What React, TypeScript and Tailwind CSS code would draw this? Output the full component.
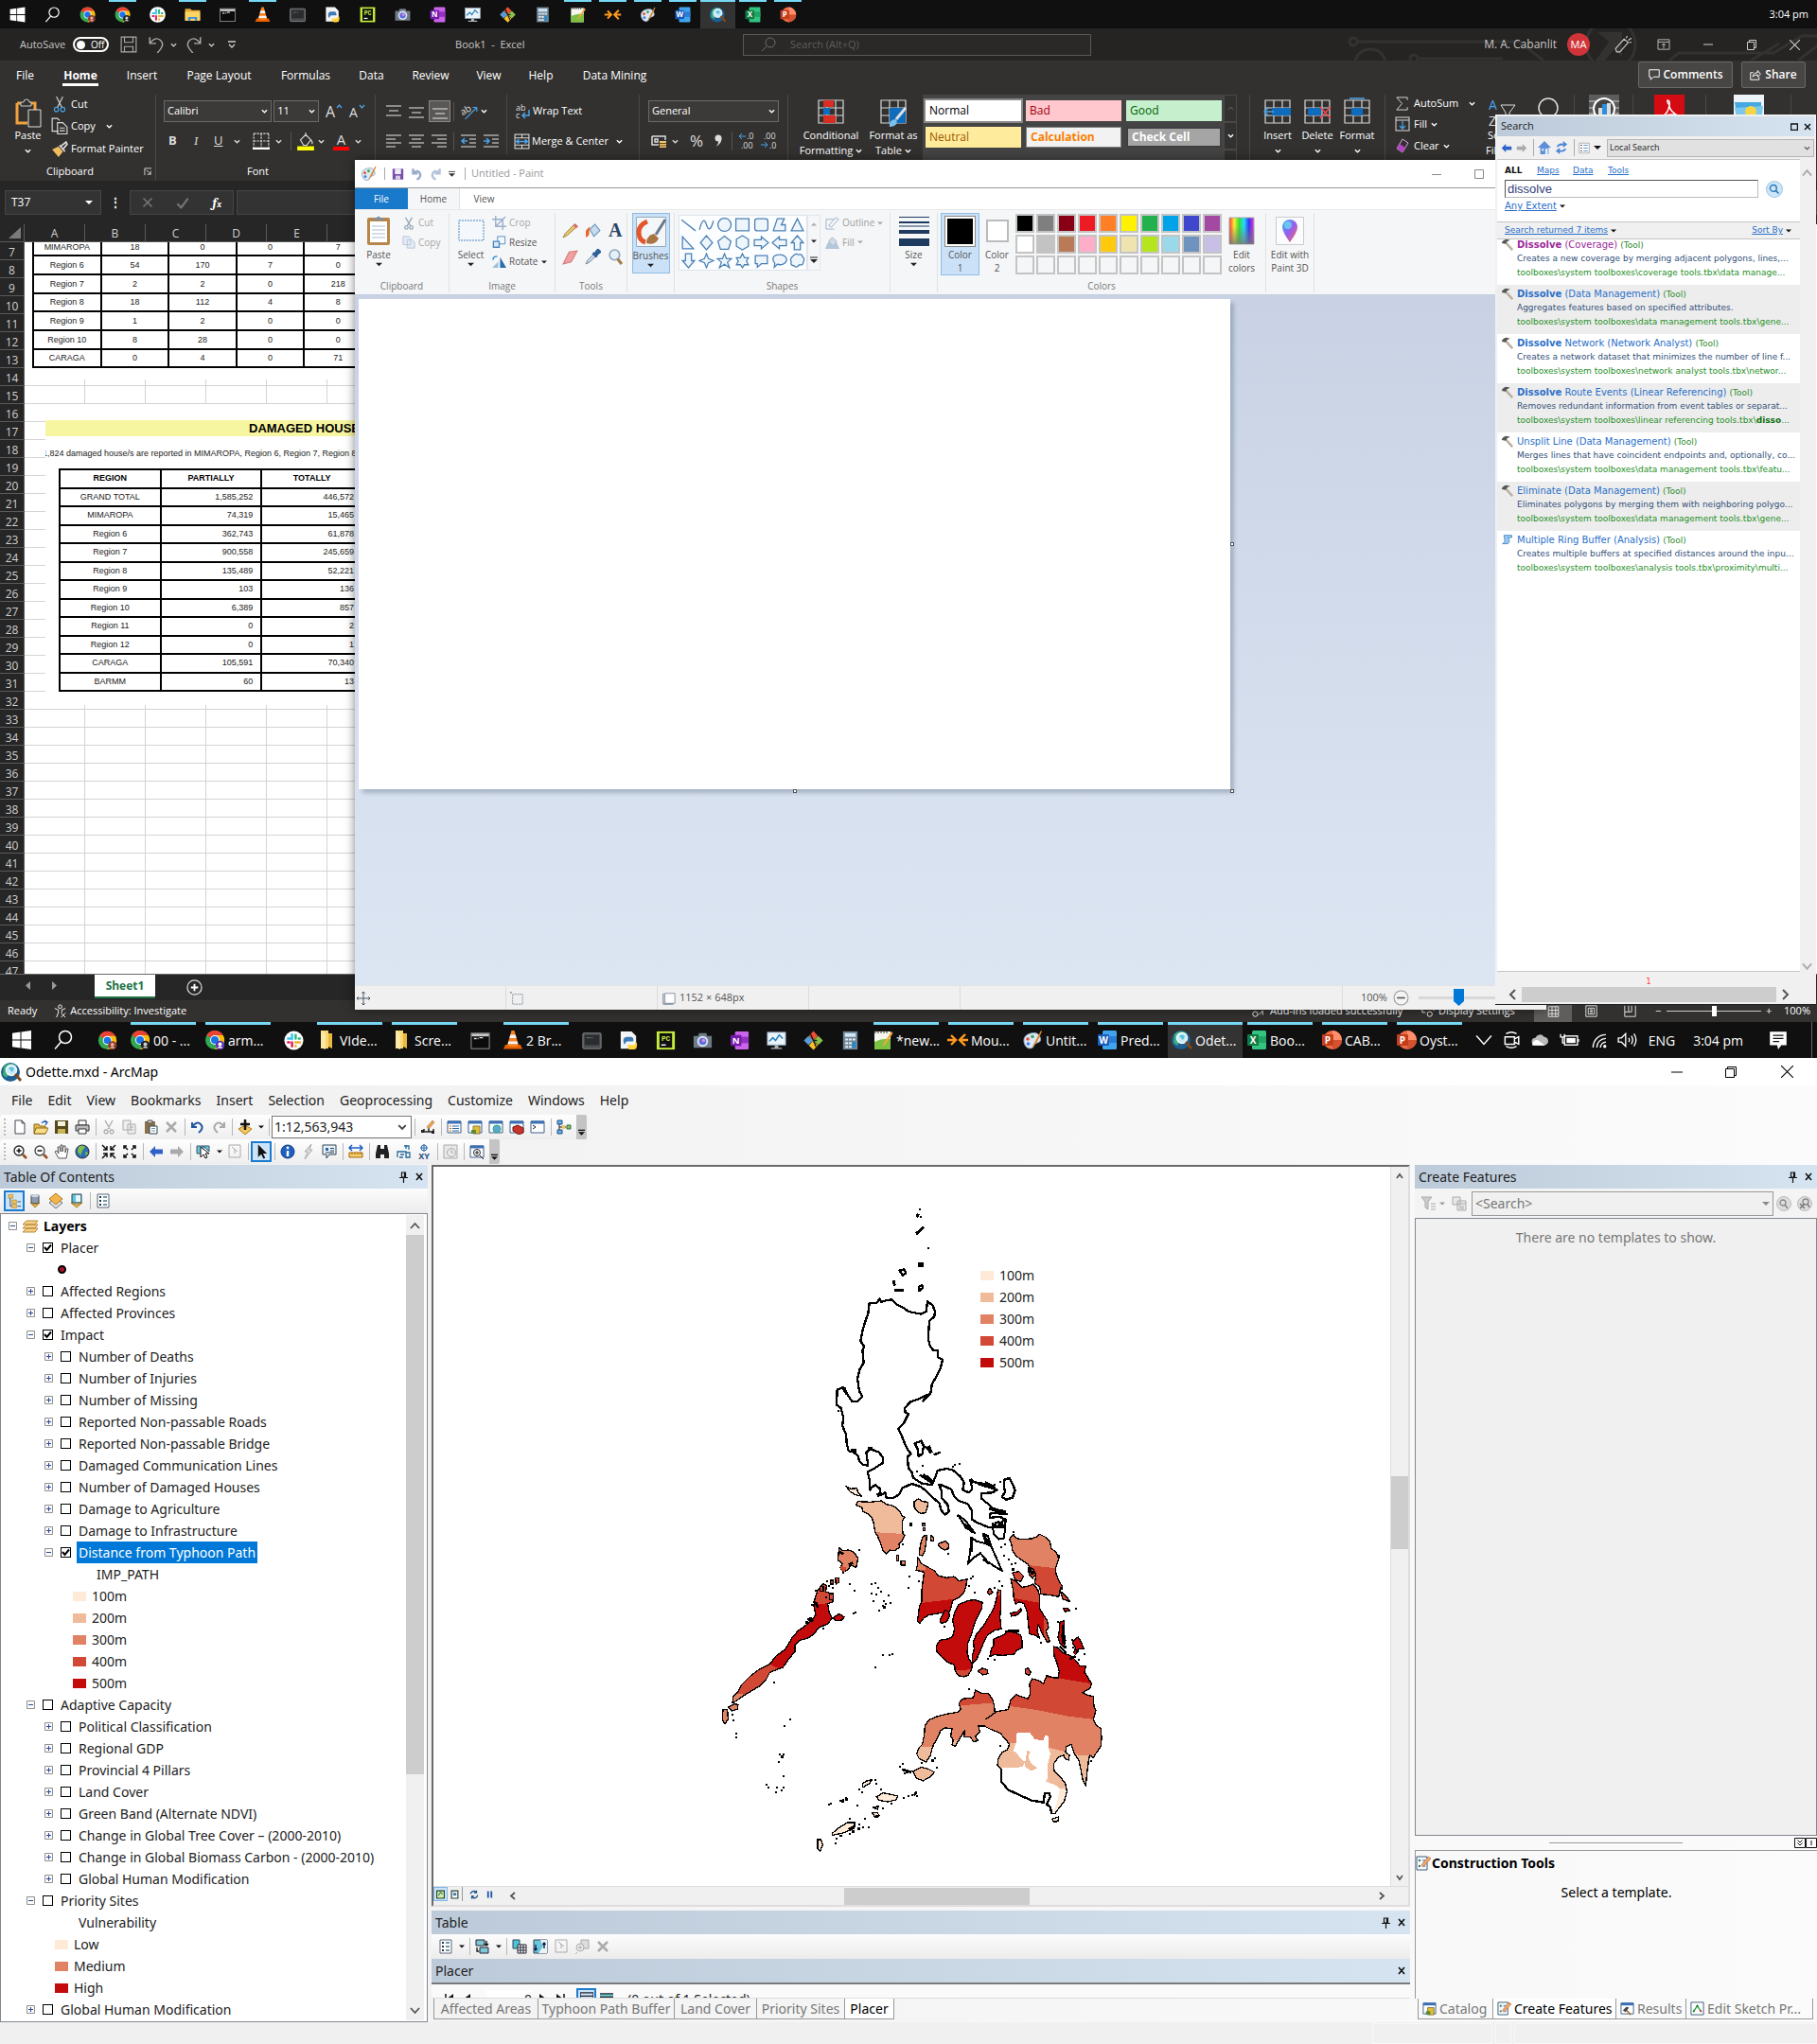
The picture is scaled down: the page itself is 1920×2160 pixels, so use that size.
import React from "react";

type Kids = { children?: React.ReactNode };

/* ---------- primitives ---------- */

function Svg({ w = 16, h = 16, vb = "0 0 16 16", children }: Kids & { w?: number; h?: number; vb?: string }) {
  return (
    <svg width={w} height={h} viewBox={vb} fill="none" aria-hidden="true" className="shrink-0">
      {children}
    </svg>
  );
}

function Chev({ c = "currentColor", s = 7 }: { c?: string; s?: number }) {
  return (
    <Svg w={s} h={s} vb="0 0 8 8">
      <path d="M1 2.500l3 3 3-3" stroke={c} strokeWidth="1.500" />
    </Svg>
  );
}

function Tri({ c = "#222", s = 7 }: { c?: string; s?: number }) {
  return (
    <Svg w={s} h={s} vb="0 0 8 8">
      <path d="M0 2h8l-4 4z" fill={c} />
    </Svg>
  );
}

/* ---------- application icons (24 x 24) ---------- */

const chrome = (badge: string, ring: string) => (
  <>
    <circle cx="12" cy="12" r="10" fill="#34a853" />
    <path d="M12 12L3.300 7A10 10 0 0 1 20.700 7z" fill="#ea4335" />
    <path d="M12 7h8.700A10 10 0 0 1 12 22l4-8z" fill="#fbbc05" />
    <circle cx="12" cy="12" r="5" fill="#fff" />
    <circle cx="12" cy="12" r="4" fill="#1a73e8" />
    <circle cx="17.500" cy="17.500" r="4.800" fill={ring} />
    <circle cx="17.500" cy="16.500" r="2" fill={badge} />
    <path d="M14.500 20.500q3-4 6 0z" fill={badge} />
  </>
);

const office = (c1: string, c2: string, dark: string, letter: string) => (
  <>
    <rect x="7" y="2" width="15" height="20" rx="1.500" fill={c1} />
    <rect x="7" y="8" width="15" height="7" fill={c2} />
    <rect x="2" y="6" width="12" height="12" rx="1" fill={dark} />
    <text x="8" y="15.500" textAnchor="middle" fontSize="10" fontWeight="700" fill="#fff" fontFamily="Open Sans, sans-serif">{letter}</text>
  </>
);

const apps: Record<string, React.ReactNode> = {
  win: <path d="M2 4.800l8.500-1.200v7.900H2zM11.500 3.500L22 2v9.500H11.500zM2 12.500h8.500v7.900L2 19.200zM11.500 12.500H22V22l-10.500-1.500z" fill="#fff" />,
  find: (
    <>
      <circle cx="14" cy="9" r="6.500" stroke="#fff" strokeWidth="1.500" />
      <path d="M9.500 14L3 21.500" stroke="#fff" strokeWidth="1.500" />
    </>
  ),
  chrome1: chrome("#e8b49a", "#8c3a32"),
  chrome2: chrome("#cfcfcf", "#222"),
  chrome3: chrome("#fff", "#5e35b1"),
  slack: (
    <>
      <circle cx="12" cy="12" r="10.500" fill="#fff" />
      <path d="M10 5.500v5" stroke="#36c5f0" strokeWidth="2.600" strokeLinecap="round" />
      <path d="M5.500 10h2.500" stroke="#36c5f0" strokeWidth="2.600" strokeLinecap="round" />
      <path d="M14 6v4M18.500 10h-1" stroke="#2eb67d" strokeWidth="2.600" strokeLinecap="round" />
      <path d="M13.800 14h5M14 18v.5" stroke="#ecb22e" strokeWidth="2.600" strokeLinecap="round" />
      <path d="M5.500 14H7M10 14v4.500" stroke="#e01e5a" strokeWidth="2.600" strokeLinecap="round" />
    </>
  ),
  explorer: (
    <>
      <path d="M2 4h7l2 2h11v14H2z" fill="#e6a93a" />
      <path d="M2 8h20v12H2z" fill="#fcd462" />
      <path d="M6 20v-5h12v5h-3v-2.500H9V20z" fill="#3a8ee0" />
    </>
  ),
  folder: (
    <>
      <path d="M6 2h8v19H6z" fill="#fbd774" />
      <path d="M14 5h4v16l-4-2z" fill="#eab840" />
      <path d="M6 2l5 3v17l-5-2z" fill="#fde9a5" />
    </>
  ),
  cmd: (
    <>
      <rect x="2" y="4" width="20" height="17" fill="#0b0b0b" stroke="#9a9a9a" />
      <path d="M2.500 4.500h19v3h-19z" fill="#c9c9c9" />
      <path d="M5 10h3M9 10h1M11 9h4" stroke="#ddd" strokeWidth="1.500" />
    </>
  ),
  cmd2: (
    <>
      <rect x="2" y="4" width="20" height="17" rx="1" fill="#4a4d50" stroke="#8a8d90" />
      <rect x="4" y="6" width="16" height="11" fill="#2a2c2e" />
      <path d="M6 9h4M11 9h2" stroke="#777" />
    </>
  ),
  vlc: (
    <>
      <path d="M4 17h16l2 4.500H2z" fill="#e85e00" />
      <path d="M10.500 2h3l4.500 16q-6 2.500-12 0z" fill="#f58220" />
      <path d="M9.300 6.500h5.400l1 3.500H8.300zM7.300 13.500h9.400l.8 2.800H6.500z" fill="#f4f4f4" />
    </>
  ),
  python: (
    <>
      <path d="M3 2h12l5 5v14H3z" fill="#f2f4f6" />
      <path d="M6 12q0-4 4-4h4q3 0 3 3v2h-6q-3 0-3 3H7q-1-1-1-4z" fill="#3d7ab5" />
      <path d="M21 17q0 5-4 5h-3q-3 0-3-3v-2h6q2 0 2-3h1q1 0 1 3z" fill="#ffd43b" />
    </>
  ),
  pycharm: (
    <>
      <rect x="2" y="2" width="20" height="20" fill="#c6ee3c" />
      <rect x="5" y="4" width="14" height="16" fill="#111" />
      <text x="12" y="12" textAnchor="middle" fontSize="8" fontWeight="700" fill="#c6ee3c" fontFamily="Liberation Mono, monospace">PC</text>
      <path d="M7 17h5" stroke="#fff" strokeWidth="1.500" />
    </>
  ),
  camera: (
    <>
      <path d="M2 7h5l1-3h8l1 3h5v13H2z" fill="#6e7b88" />
      <circle cx="12" cy="13" r="6" fill="#dfe6ee" />
      <circle cx="12" cy="13" r="4" fill="#5b6fe0" />
      <circle cx="13" cy="12" r="1.800" fill="#e78bd0" />
    </>
  ),
  onenote: office("#ca64ea", "#9332bf", "#7719aa", "N"),
  monitor: (
    <>
      <rect x="2" y="3" width="20" height="14" fill="#e9f4fb" stroke="#93a5b3" />
      <path d="M4 13l4-4 3 3 4-6 4 4" stroke="#2b7fb8" strokeWidth="1.500" />
      <path d="M10 17h4v3h4v1.500H6V20h4z" fill="#aab4bb" />
    </>
  ),
  git: (
    <>
      <path d="M12 1.500L17 7l-5 5-5-5z" fill="#f05133" />
      <path d="M6.500 7L12 12l-5.500 5L1.500 12z" fill="#5b9bd5" />
      <path d="M17.500 7l5 5-5 5L12 12z" fill="#8bc34a" />
      <path d="M12 12l5 5.500-5 5-5-5z" fill="#fbc02d" />
      <path d="M9 5l6 14M12 12h4" stroke="#1b1b1b" strokeWidth="1.500" />
    </>
  ),
  calc: (
    <>
      <rect x="4" y="2" width="16" height="20" fill="#6f8596" />
      <rect x="6" y="4" width="12" height="4" fill="#cfe6f5" />
      <path d="M6.500 11h3M10.500 11h3M14.500 11h3M6.500 15h3M10.500 15h3M6.500 19h3M10.500 19h3" stroke="#e6edf2" strokeWidth="2.200" />
      <path d="M16 13.500v6.500" stroke="#1b8ad6" strokeWidth="3" />
    </>
  ),
  notepad: (
    <>
      <rect x="3" y="3" width="17" height="19" fill="#f5f7ee" />
      <path d="M3 14q8-4 17-3v11H3z" fill="#7cc142" />
      <path d="M21 3l-8 12-1.500 3.500 3-2L22.500 5z" fill="#f3a73b" />
      <path d="M4 2v3M7 2v3M10 2v3M13 2v3M16 2v3" stroke="#333" />
    </>
  ),
  arrows: <path d="M1 12h8M5 7l5 5-5 5M23 12h-8M20 6l-6 6 6 6" stroke="#ff9a1f" strokeWidth="2.400" />,
  paint: (
    <>
      <path d="M3 14Q2 7 10 5t10 4q2 5-3 6-4 0-4 3t-4 3q-5-1-6-7z" fill="#dce8f3" stroke="#8aa6bf" />
      <circle cx="7" cy="11" r="1.800" fill="#e64b3c" />
      <circle cx="12" cy="8.500" r="1.800" fill="#3ba55c" />
      <circle cx="7.500" cy="16" r="1.800" fill="#3c7de6" />
      <path d="M21 2l-6 11-3 8 5-7 5-11z" fill="#d9862b" />
    </>
  ),
  word: office("#41a5ee", "#2b7cd3", "#185abd", "W"),
  excel: office("#33c481", "#21a366", "#107c41", "X"),
  ppt: (
    <>
      <circle cx="13" cy="12" r="10" fill="#ed6c47" />
      <path d="M13 2a10 10 0 0 1 10 10H13z" fill="#ff8f6b" />
      <path d="M23 12a10 10 0 0 1-10 10V12z" fill="#d35230" />
      <rect x="2" y="6" width="12" height="12" rx="1" fill="#c43e1c" />
      <text x="8" y="15.500" textAnchor="middle" fontSize="10" fontWeight="700" fill="#fff" fontFamily="Open Sans, sans-serif">P</text>
    </>
  ),
  arcmap: (
    <>
      <circle cx="11" cy="12" r="10" fill="#1c5f93" />
      <path d="M4 6q6-6 13-1l-2 5-5 2-3 6-4-3z" fill="#3fae7d" />
      <circle cx="12" cy="10" r="5.500" fill="#c9ebf7" stroke="#eef8fc" strokeWidth="1.500" />
      <path d="M9 8q3-3 6 0l-2 4z" fill="#5bbfe0" />
      <path d="M16 14l6 7" stroke="#7a4a22" strokeWidth="3" />
    </>
  ),
};

function AppIcon({ name, s }: { name: string; s: number }) {
  return <Svg w={s} h={s} vb="0 0 24 24">{apps[name]}</Svg>;
}

/* ---------- taskbars ---------- */

const topTasks: [string, number][] = [
  ["win", 0], ["find", 0], ["chrome1", 0], ["chrome2", 1], ["slack", 0], ["explorer", 1], ["cmd", 0], ["vlc", 1], ["cmd2", 0],
  ["python", 0], ["pycharm", 0], ["camera", 0], ["onenote", 0], ["monitor", 0], ["git", 0], ["calc", 0], ["notepad", 1],
  ["arrows", 1], ["paint", 1], ["word", 1], ["arcmap", 2], ["excel", 1], ["ppt", 1],
];

function TopTaskbar() {
  return (
    <nav className="flex h-[30px] items-stretch bg-[#101010] text-white">
      {topTasks.map(([n, open]) => (
        <button key={n} aria-label={n} className={open === 2 ? "relative flex w-[37px] items-center justify-center bg-[#333]" : "relative flex w-[37px] items-center justify-center"}>
          {open > 0 && <span className={open === 2 ? "absolute inset-x-0 top-0 h-[2px] bg-[#76d8f5]" : "absolute inset-x-1 top-0 h-[2px] bg-[#76d8f5]"} />}
          <AppIcon name={n} s={19} />
        </button>
      ))}
      <span className="ml-auto self-center pr-[9px] text-[11px]">3:04 pm</span>
    </nav>
  );
}

const tasks: [string, string?, boolean?][] = [
  ["chrome1"], ["chrome2", "00 - ..."], ["chrome3", "arm..."], ["slack"], ["folder", "VIde..."], ["folder", "Scre..."], ["cmd"],
  ["vlc", "2 Br..."], ["cmd2"], ["python"], ["pycharm"], ["camera"], ["onenote"], ["monitor"], ["git"], ["calc"],
  ["notepad", "*new..."], ["arrows", "Mou..."], ["paint", "Untit..."], ["word", "Pred..."], ["arcmap", "Odet...", true],
  ["excel", "Boo..."], ["ppt", "CAB..."], ["ppt", "Oyst..."],
];

function Taskbar() {
  return (
    <nav className="relative flex h-[38px] items-stretch bg-[#101010] text-[14px] text-white">
      <button aria-label="Start" className="flex w-[45px] items-center justify-center"><AppIcon name="win" s={24} /></button>
      <button aria-label="Search" className="mr-[6px] flex w-[43px] items-center justify-center"><AppIcon name="find" s={24} /></button>
      {tasks.map(([n, label, active], i) =>
        label ? (
          <button key={i} className={active ? "relative flex w-[79px] items-center bg-[#333] pl-[3px]" : "relative flex w-[79px] items-center pl-[3px]"}>
            <span className={active ? "absolute inset-x-0 top-0 h-[3px] bg-[#76d8f5]" : "absolute inset-x-[5px] top-0 h-[3px] bg-[#76d8f5]"} />
            <AppIcon name={n} s={24} />
            <span className="pl-[2px] whitespace-nowrap">{label}</span>
          </button>
        ) : (
          <button key={i} aria-label={n} className="flex w-[39px] items-center justify-center"><AppIcon name={n} s={23} /></button>
        ),
      )}
      <div className="ml-auto flex items-center gap-[11px] pr-[31px]">
        <Svg w={18} h={18}><path d="M1 4l7 8 7-8" stroke="#fff" strokeWidth="1.300" /></Svg>
        <Svg w={18} h={20} vb="0 0 16 18"><path d="M3 3q5-3 10 0M3 15q5 3 10 0M2 6h9v7H2zM11 8l4-2v7l-4-2z" stroke="#fff" strokeWidth="1.300" /></Svg>
        <Svg w={20} h={18}><path d="M4 13a3.500 3.500 0 0 1 0-7 4.500 4.500 0 0 1 8-1 4 4 0 0 1 0 8z" fill="#bbb" /><path d="M1 13q0-5 5-5l7 5z" fill="#fff" /></Svg>
        <Svg w={21} h={18} vb="0 0 20 16"><rect x="5" y="4" width="13" height="9" stroke="#fff" strokeWidth="1.300" /><rect x="7" y="6" width="9" height="5" fill="#fff" /><path d="M1 2v3h4V2M3 5v6h2M19 7v3" stroke="#fff" strokeWidth="1.300" /></Svg>
        <Svg w={18} h={18}><path d="M3 15A12 12 0 0 1 15 3M6.500 15A8.500 8.500 0 0 1 15 6.500M10 15a5 5 0 0 1 5-5" stroke="#fff" strokeWidth="1.200" /><circle cx="14" cy="14" r="1.500" fill="#fff" /></Svg>
        <Svg w={22} h={18} vb="0 0 20 16"><path d="M1 6h3l4-4v12l-4-4H1zM11 6q1 2 0 4M13.500 4q2.500 4 0 8M16 2q4 6 0 12" stroke="#fff" strokeWidth="1.200" /></Svg>
        <span>ENG</span>
        <time className="px-2 whitespace-nowrap">3:04 pm</time>
        <span className="pl-[8px]"><Svg w={20} h={22} vb="0 0 18 20"><path d="M1 2h16v13h-5l-3 4-1-4H1z" fill="#fff" /><path d="M4 5.500h10M4 8.500h10M4 11.500h6" stroke="#101010" strokeWidth="1.200" /></Svg></span>
      </div>
      <span className="absolute inset-y-0 right-[5px] w-px bg-[#666]" />
    </nav>
  );
}

/* ---------- Excel ---------- */

function DarkCombo({ label, value, cls }: { label: string; value: string; cls: string }) {
  return (
    <label className={"relative flex h-[23px] items-center border border-[#6b6a69] bg-[#3b3a39] " + cls}>
      <select aria-label={label} className="h-full w-full appearance-none bg-transparent px-[3px] text-[11px] text-white outline-none">
        <option>{value}</option>
      </select>
      <span className="pointer-events-none absolute right-[3px]"><Chev /></span>
    </label>
  );
}

function Lines({ p }: { p: string }) {
  return <Svg w={16} h={16}><path d={p} stroke="#e8e8e8" strokeWidth="1.200" /></Svg>;
}

const VSep = () => <span className="h-[20px] w-px shrink-0 bg-[#55534f]" />;

const excelTabs: [string, string][] = [
  ["File", "w-[49px]"], ["Home", "w-[68px]"], ["Insert", "w-[62px]"], ["Page Layout", "w-[101px]"], ["Formulas", "w-[82px]"],
  ["Data", "w-[57px]"], ["Review", "w-[68px]"], ["View", "w-[55px]"], ["Help", "w-[55px]"], ["Data Mining", "w-[101px]"],
];

const gridIcon = <path d="M1 1h26v24H1zM1 9h26M1 17h26M10 1v24M19 1v24" stroke="#d8d8d8" strokeWidth="1.200" />;

function Big({ icon, l1, l2, cls }: { icon: React.ReactNode; l1: string; l2?: string; cls: string }) {
  return (
    <button className={"flex flex-col items-center pt-[3px] text-[11px] leading-[16px] whitespace-nowrap " + cls}>
      <Svg w={30} h={32} vb="0 0 30 32">{icon}</Svg>
      <span>{l1}</span>
      {l2 ? <span className="flex items-center gap-[3px]">{l2}<Chev /></span> : <span className="flex h-[16px] items-center"><Chev /></span>}
    </button>
  );
}

const styleCells: [string, string][] = [
  ["Normal", "bg-white text-black outline-2 outline-[#8a8886]"],
  ["Bad", "bg-[#ffc7ce] text-[#9c0006]"],
  ["Good", "bg-[#c6efce] text-[#006100]"],
  ["Neutral", "bg-[#ffeb9c] text-[#9c5700]"],
  ["Calculation", "border border-[#7f7f7f] bg-[#f2f2f2] font-bold text-[#fa7d00]"],
  ["Check Cell", "border-2 border-[#3f3f3f] bg-[#a5a5a5] font-bold text-white"],
];

function ExcelRibbon() {
  return (
    <div className="flex h-[91px] items-start overflow-hidden bg-[#323130] text-[11px] whitespace-nowrap text-white">
      <div className="flex h-[91px] w-[165px] shrink-0 flex-col border-r border-[#4a4846]">
        <div className="flex h-[72px] shrink-0">
          <Big cls="w-[53px] pl-[6px]" l1="Paste" icon={<><path d="M3 6h4M16 6h6v8M3 6v21h11" stroke="#f0a23c" strokeWidth="3" /><path d="M7 9V5h3q0-3 3-3t3 3h2v4z" stroke="#ccc" fill="#323130" /><path d="M15 13h13v18H15z" fill="#323130" stroke="#e0e0e0" /></>} />
          <div className="flex flex-col pl-px">
            <button className="flex h-[20px] items-center gap-[3px]"><Svg w={18} h={18}><path d="M5 1l5 10M11 1L6 11" stroke="#ccc" /><circle cx="5" cy="13" r="2" stroke="#4aa3e8" /><circle cx="11" cy="13" r="2" stroke="#4aa3e8" /></Svg>Cut</button>
            <button className="flex h-[26px] items-center gap-[3px]"><Svg w={18} h={18}><path d="M7 13H1V1h5l2 2M6 5h5l4 4v6.500H6zM8 10h5M8 12.500h5" stroke="#ddd" /></Svg>Copy<span className="pl-[8px]"><Chev /></span></button>
            <button className="flex h-[23px] items-center gap-[3px]"><Svg w={18} h={18}><path d="M1 8l6-3 4 5-4 5z" fill="#f0bd5c" /><path d="M8 4l5 6M9 5l5-4 1 2-4 5" stroke="#ddd" strokeWidth="1.500" /></Svg>Format Painter</button>
          </div>
        </div>
        <div className="relative flex h-[19px] items-center justify-center pr-[16px]">Clipboard<span className="absolute right-[3px]"><Svg w={9} h={9} vb="0 0 10 10"><path d="M1 9V1h8M3 3l5 5M8 4v4H4" stroke="#ddd" /></Svg></span></div>
      </div>

      <div className="flex h-[91px] w-[232px] shrink-0 flex-col border-r border-[#4a4846] px-[8px]">
        <div className="flex h-[35px] shrink-0 items-center gap-[2px]">
          <DarkCombo label="Font" value="Calibri" cls="w-[117px]" />
          <DarkCombo label="Font size" value="11" cls="w-[49px]" />
          <button className="flex w-[26px] justify-center pl-[3px]" aria-label="Grow font"><Svg w={18} h={18} vb="0 0 18 18"><text x="0" y="15" fontSize="16" fill="#ddd">A</text><path d="M12 5l2.500-3L17 5" stroke="#4aa3e8" strokeWidth="1.300" /></Svg></button>
          <button className="flex w-[22px] justify-center" aria-label="Shrink font"><Svg w={18} h={18} vb="0 0 18 18"><text x="1" y="15" fontSize="14" fill="#ddd">A</text><path d="M12 2l2.500 3L17 2" stroke="#4aa3e8" strokeWidth="1.300" /></Svg></button>
        </div>
        <div className="mb-[9px] flex h-[28px] shrink-0 items-center pl-[3px] text-[13px] text-[#ddd]">
          <button className="w-[23px] pl-[2px] text-left font-bold">B</button>
          <button className="w-[23px] pl-[6px] text-left font-serif italic">I</button>
          <button className="w-[23px] pl-[4px] text-left underline">U</button>
          <span className="w-[22px] pl-[2px]"><Chev /></span>
          <Svg w={18} h={18}><path d="M1 1h14M1 8h14M8 1v13M1 1v13M15 1v13" stroke="#ddd" strokeDasharray="2 1" /><path d="M0 15h16" stroke="#fff" strokeWidth="2" /></Svg>
          <span className="w-[22px] pl-[6px]"><Chev /></span>
          <VSep />
          <span className="pl-[6px]"><Svg w={18} h={20} vb="0 0 16 18"><path d="M3 8l5-5 5 5-4 5H6zM8 3V1M13 8q2 2 1 4" stroke="#ddd" /><path d="M0 16h16" stroke="#ff0" strokeWidth="4" /></Svg></span>
          <span className="w-[20px] pl-[4px]"><Chev /></span>
          <span className="flex w-[17px] flex-col items-center text-[15px] leading-[16px]">A<span className="h-[4px] w-full bg-[#f00]" /></span>
          <span className="pl-[6px]"><Chev /></span>
        </div>
        <div className="flex h-[19px] items-center justify-center pr-[16px]">Font</div>
      </div>

      <div className="flex h-[91px] w-[279px] shrink-0 flex-col border-r border-[#4a4846] pl-[8px]">
        <div className="flex h-[35px] items-center">
          <span className="w-[24px] pl-[3px]"><Lines p="M0 2h16M3 7h10M0 12h16" /></span>
          <span className="w-[24px] pl-[3px]"><Lines p="M0 4h16M3 9h10M0 14h16" /></span>
          <span className="flex h-[23px] w-[23px] items-center justify-center border border-[#8a8886] bg-[#5a5856]"><Lines p="M0 5h16M3 10h10M0 15h16" /></span>
          <span className="w-[3px]" /><VSep />
          <span className="pl-[7px]"><Svg w={18} h={18}><path d="M4 15L15 4M15 4h-4M15 4v4" stroke="#4aa3e8" /><text x="0" y="10" fontSize="9" fill="#ddd" transform="rotate(-30 4 8)">ab</text></Svg></span>
          <span className="w-[30px] pl-[3px]"><Chev /></span>
          <span className="h-[35px] w-px bg-[#4a4846]" />
          <span className="pl-[9px]"><Svg w={16} h={18} vb="0 0 16 18"><text x="0" y="8" fontSize="9" fill="#ddd">ab</text><text x="0" y="16" fontSize="9" fill="#ddd">c</text><path d="M14 7v6H7M10 10l-3 3 3 3" stroke="#4aa3e8" strokeWidth="1.500" /></Svg></span>
          <button className="pl-[2px]">Wrap Text</button>
        </div>
        <div className="flex h-[28px] items-center">
          <span className="w-[24px] pl-[3px]"><Lines p="M0 2h16M0 6h10M0 10h16M0 14h10" /></span>
          <span className="w-[24px] pl-[3px]"><Lines p="M0 2h16M3 6h10M0 10h16M3 14h10" /></span>
          <span className="w-[26px] pl-[3px]"><Lines p="M0 2h16M6 6h10M0 10h16M6 14h10" /></span>
          <VSep />
          <span className="w-[24px] pl-[7px]"><Svg><path d="M0 2h16M9 6h7M9 10h7M0 14h16" stroke="#e8e8e8" /><path d="M7 8H1M4 5L1 8l3 3" stroke="#4aa3e8" strokeWidth="1.500" /></Svg></span>
          <span className="w-[31px] pl-[7px]"><Svg><path d="M0 2h16M9 6h7M9 10h7M0 14h16" stroke="#e8e8e8" /><path d="M0 8h6M3 5l3 3-3 3" stroke="#4aa3e8" strokeWidth="1.500" /></Svg></span>
          <span className="h-[28px] w-px bg-[#4a4846]" />
          <span className="pl-[7px]"><Svg w={17} h={17}><rect x="1" y="1" width="14" height="14" stroke="#ddd" /><path d="M1 4.500h14M1 11.500h14M8 1v3M8 12v3" stroke="#ddd" /><path d="M2 8h12M5 6L2.500 8 5 10M11 6l2.500 2L11 10" stroke="#4aa3e8" strokeWidth="1.500" /></Svg></span>
          <button className="flex items-center gap-[8px] pl-[2px]">Merge &amp; Center<Chev /></button>
        </div>
      </div>

      <div className="flex h-[91px] w-[157px] shrink-0 flex-col border-r border-[#4a4846] px-[9px]">
        <div className="flex h-[35px] items-center"><DarkCombo label="Number format" value="General" cls="w-[140px]" /></div>
        <div className="flex h-[28px] items-center text-[17px] text-[#ddd]">
          <span className="pl-[3px]"><Svg w={18} h={16} vb="0 0 18 16"><path d="M1 3h14v4M1 3v9h7M4 6h3v3H4z" stroke="#ddd" strokeWidth="1.500" /><path d="M9 8h7v7H9z" fill="#f0c674" /><path d="M9 10.500h7M9 13h7" stroke="#6a4c10" /></Svg></span>
          <span className="w-[21px] pl-[4px]"><Chev /></span>
          <button className="w-[18px]">%</button>
          <span className="flex w-[28px] justify-center"><Svg w={9} h={14} vb="0 0 9 14"><circle cx="4" cy="4" r="3.500" fill="#ddd" /><path d="M7.500 4q0 6-6 9 3-3 3-7z" fill="#ddd" /></Svg></span>
          <VSep />
          <span className="pl-[6px]"><Svg w={18} h={20} vb="0 0 18 20"><text x="9" y="8" fontSize="9" fill="#ddd">.0</text><text x="3" y="18" fontSize="9" fill="#ddd">.00</text><path d="M8 5H1M4 2L1 5l3 3" stroke="#4aa3e8" /></Svg></span>
          <span className="pl-[6px]"><Svg w={18} h={20} vb="0 0 18 20"><text x="3" y="8" fontSize="9" fill="#ddd">.00</text><text x="9" y="18" fontSize="9" fill="#ddd">.0</text><path d="M0 14h7M4 11l3 3-3 3" stroke="#4aa3e8" /></Svg></span>
        </div>
      </div>

      <div className="flex h-[87px] w-[488px] shrink-0 border-r border-[#4a4846]">
        <Big cls="ml-[10px] w-[70px]" l1="Conditional" l2="Formatting" icon={<g transform="translate(1 2)">{gridIcon}<path d="M6 1h11v7H6zM6 17h13v8H6z" fill="#d92c23" /><path d="M6 9h7v7H6z" fill="#0f6cbd" /></g>} />
        <Big cls="w-[62px]" l1="Format as" l2="Table" icon={<g transform="translate(1 2)">{gridIcon}<path d="M10 9h17v16H10z" fill="#0f6cbd" /><path d="M27 9L17 21" stroke="#ddd" strokeWidth="3" /><path d="M10 29q-1-8 7-8 3 7-7 8z" fill="#7cc0ee" /></g>} />
        <div className="flex bg-[#444]">
          <div className="grid grid-cols-[101px_101px_101px] content-start gap-x-[5px] gap-y-[6px] py-[6px] pl-[3px]">
            {styleCells.map(([t, c]) => (
              <button key={t} className={"h-[22px] px-[4px] text-left text-[12px] leading-[18px] " + c}>{t}</button>
            ))}
          </div>
          <div className="ml-[2px] grid w-[14px] grid-rows-3 bg-[#323130] text-white">
            <span className="flex items-center justify-center border border-[#4a4846]"><Svg w={7} h={7} vb="0 0 8 8"><path d="M1 5.500l3-3 3 3" stroke="#777" /></Svg></span>
            <span className="flex items-center justify-center border border-[#4a4846]"><Chev /></span>
            <span className="flex items-center justify-center border border-[#4a4846]"><Svg w={8} h={8} vb="0 0 8 8"><path d="M0 1h8M1 4l3 3 3-3" stroke="#fff" strokeWidth="1.300" /></Svg></span>
          </div>
        </div>
      </div>

      <div className="flex h-[87px] w-[143px] shrink-0 border-r border-[#4a4846] pl-[8px]">
        <Big cls="w-[42px]" l1="Insert" icon={<g transform="translate(1 2)">{gridIcon}<path d="M8 9h20v8H8z" fill="#0f6cbd" /><path d="M10 13H0M5 8l-5 5 5 5" stroke="#4aa3e8" strokeWidth="1.500" /></g>} />
        <Big cls="w-[42px]" l1="Delete" icon={<g transform="translate(1 2)">{gridIcon}<path d="M4 9h14v8H4z" fill="#0f6cbd" /><path d="M17 8l11 12M28 8L17 20" stroke="#e5484d" strokeWidth="1.800" /></g>} />
        <Big cls="w-[42px]" l1="Format" icon={<g transform="translate(1 2)">{gridIcon}<path d="M8 9h12v8H8z" fill="#0f6cbd" /><path d="M6-1h16" stroke="#4aa3e8" strokeWidth="1.500" /></g>} />
      </div>

      <div className="flex h-[87px] w-[200px] shrink-0 border-r border-[#4a4846] pl-[10px]">
        <div className="flex w-[92px] flex-col">
          <button className="flex h-[18px] items-center gap-[5px]"><Svg w={15} h={17}><path d="M14 4V1H2l6 7-6 7h12v-3" stroke="#ddd" /></Svg>AutoSum<span className="pl-[6px]"><Chev /></span></button>
          <button className="flex h-[26px] items-center gap-[4px]"><Svg w={16} h={16}><rect x="1" y="1" width="14" height="14" stroke="#ddd" /><path d="M1 4h14" stroke="#ddd" /><path d="M8 5v8M5 10l3 3 3-3" stroke="#4aa3e8" strokeWidth="1.300" /></Svg>Fill<Chev /></button>
          <button className="flex h-[20px] items-center gap-[4px]"><Svg w={16} h={16}><path d="M8 1l6 4-6 10-6-4z" stroke="#d9a5e8" /><path d="M5 6l6 4-3 5-6-4z" fill="#b146c2" /></Svg>Clear<Chev /></button>
        </div>
        <Big cls="w-[44px]" l1="Sort &amp;" l2="Filter" icon={<><text x="0" y="13" fontSize="14" fill="#4aa3e8">A</text><text x="0" y="30" fontSize="14" fill="#ddd">Z</text><path d="M13 8h15l-6 8v10l-4-3v-7z" stroke="#ddd" /></>} />
        <Big cls="w-[52px]" l1="Find &amp;" l2="Select" icon={<><circle cx="15" cy="11" r="10" stroke="#ddd" strokeWidth="1.500" /></>} />
      </div>
      <div className="flex h-[87px] w-[62px] shrink-0 justify-center border-r border-[#4a4846]"><Svg w={32} h={32} vb="0 0 32 32"><path d="M0 0h32v32H0z" fill="#5c5c5c" /><path d="M0 7h32M0 14h32M0 20h32" stroke="#ccc" /><circle cx="16" cy="15" r="11" fill="#444" stroke="#fff" strokeWidth="2" /><path d="M10 14h4v8h-4zM19 9h4v12h-4z" fill="#ddd" /><path d="M14 10h5v12h-5z" fill="#2f8fdd" /></Svg></div>
      <div className="flex h-[87px] w-[77px] shrink-0 justify-center border-r border-[#4a4846]"><Svg w={32} h={32} vb="0 0 32 32"><path d="M0 0h32v32H0z" fill="#d40b12" /><path d="M14 6q3 0 2 6 0 5 10 11-6-4-18 0 7-3 8-12-3-4-2-5z" stroke="#fff" strokeWidth="1.500" /></Svg></div>
      <div className="flex h-[87px] w-[90px] shrink-0 items-start justify-center border-r border-[#4a4846]"><Svg w={32} h={32} vb="0 0 32 32"><path d="M0 0h32v32H0z" fill="#eef3f7" /><path d="M1 8l28 0v20H4z" fill="#45a9e0" /><path d="M1 14l30-2-2 18H4z" fill="#7cc7ee" /><circle cx="18" cy="18" r="6" fill="#f5d543" /><path d="M16 24h4" stroke="#888" strokeWidth="3" /></Svg></div>
    </div>
  );
}

const upper = [
  ["Region 6", "54", "170", "7", "0"], ["Region 7", "2", "2", "0", "218"], ["Region 8", "18", "112", "4", "8"],
  ["Region 9", "1", "2", "0", "0"], ["Region 10", "8", "28", "0", "0"], ["CARAGA", "0", "4", "0", "71"],
];

const houses = [
  ["GRAND TOTAL", "1,585,252", "446,572"], ["MIMAROPA", "74,319", "15,465"], ["Region 6", "362,743", "61,878"],
  ["Region 7", "900,558", "245,659"], ["Region 8", "135,489", "52,221"], ["Region 9", "103", "136"], ["Region 10", "6,389", "857"],
  ["Region 11", "0", "2"], ["Region 12", "0", "1"], ["CARAGA", "105,591", "70,340"], ["BARMM", "60", "13"],
];

const rowNums = Array.from({ length: 41 }, (_, i) => i + 7);
const cols = ["A", "B", "C", "D", "E", "F"];

function Sheet() {
  return (
    <div className="relative h-[792px] overflow-hidden bg-white">
      <table className="w-[410px] table-fixed border-separate border-spacing-0 text-[12px]">
        <thead>
          <tr className="h-[19px] bg-[#262626] text-[#d0d0d0]">
            <th className="relative w-[26px] border-r border-b border-[#5a5a5a]"><span className="absolute right-[3px] bottom-[3px]"><Svg w={13} h={12} vb="0 0 13 12"><path d="M13 0v12H0z" fill="#7a7a7a" /></Svg></span></th>
            {cols.map((c) => <th key={c} className="h-[19px] w-[64px] border-r border-b border-[#5a5a5a] p-0 pt-[2px] leading-[16px] font-normal">{c}</th>)}
          </tr>
        </thead>
        <tbody>
          {rowNums.map((n) => (
            <tr key={n} className="h-[19px]">
              <th className="h-[19px] border-r border-b border-[#5a5a5a] bg-[#262626] p-0 pt-[3px] text-center leading-[15px] font-normal text-[#d0d0d0]">{n}</th>
              {cols.map((c) => <td key={c} className="border-r border-b border-[#d4d4d4] p-0" />)}
            </tr>
          ))}
        </tbody>
      </table>

      <div className="absolute top-[19px] left-[26px] h-[145px] w-[400px] overflow-hidden bg-white pl-[8px] font-['Liberation_Sans',sans-serif] text-[9px] text-[#222]">
        <table className="w-[360px] table-fixed border-collapse text-center leading-[9px]">
          <tbody>
            <tr className="h-[14px]">{["MIMAROPA", "18", "0", "0", "7"].map((v, i) => <td key={i} className="border-x-2 border-b-2 border-black p-0 pb-[3px]">{v}</td>)}</tr>
            {upper.map((r, i) => (
              <tr key={r[0]} className={i % 3 === 2 ? "h-[19px]" : "h-[20px]"}>{r.map((v, j) => <td key={j} className="border-2 border-black p-0">{v}</td>)}</tr>
            ))}
          </tbody>
        </table>
      </div>

      <div className="absolute top-[190px] left-[48px] h-[318px] w-[400px] overflow-hidden bg-white pt-[17px] font-['Liberation_Sans',sans-serif] text-[9px] text-[#222]">
        <h3 className="h-[17px] bg-[#f7f6a0] pl-[215px] text-[13px] leading-[17px] font-bold whitespace-nowrap text-black">DAMAGED HOUSES</h3>
        <p className="mt-[12px] -ml-[3px] h-[12px] leading-[12px] whitespace-nowrap">1,824 damaged house/s are reported in MIMAROPA, Region 6, Region 7, Region 8</p>
        <table className="mt-[10px] ml-[14px] h-[236px] w-[322px] table-fixed border-collapse leading-[9px]">
          <tbody>
            <tr className="h-[19px]">{["REGION", "PARTIALLY", "TOTALLY"].map((v) => <th key={v} scope="col" className="border-2 border-black p-0 text-center text-black">{v}</th>)}</tr>
            {houses.map((r) => (
              <tr key={r[0]} className="h-[19px]">
                <td className="border-2 border-black p-0 text-center">{r[0]}</td>
                <td className="border-2 border-black py-0 pr-[8px] text-right">{r[1]}</td>
                <td className="border-2 border-black py-0 pr-[8px] text-right">{r[2]}</td>
              </tr>
            ))}
          </tbody>
        </table>
      </div>
    </div>
  );
}

function Excel() {
  return (
    <div className="flex flex-col bg-[#262626] text-white">
      <header className="relative flex h-[34px] items-center bg-[#252423] text-[11px] text-[#c8c6c4]">
        <div className="absolute top-0 right-0">
          <Svg w={500} h={34} vb="0 0 500 34"><g stroke="#333231" strokeWidth="3"><circle cx="10" cy="14" r="4" /><path d="M15 14h170l26 20M78 32h90M344 34l10-8h100l30-18h20M430 34l30-18M480 34l26-20" /><circle cx="74" cy="32" r="4" /><path d="M12 34q4-12 16-12t16 12" /><circle cx="282" cy="17" r="26" /></g><path d="M268 4h26v26l-8-8-10 12h-10l14-20z" fill="#333231" /></Svg>
        </div>
        <span className="pl-[21px]">AutoSave</span>
        <button aria-label="AutoSave off" className="ml-[8px] flex h-[16px] w-[38px] items-center gap-[6px] rounded-full border-2 border-white pl-[2px] text-[10px] text-white"><span className="h-[9px] w-[9px] rounded-full bg-white" />Off</button>
        <div className="flex w-[124px] items-center gap-[6px] pl-[12px]">
          <Svg w={18} h={18}><path d="M1 1h14v14H1zM4 1v5h8V1M4 15v-5h8v5" stroke="#aaa" /></Svg>
          <span className="pl-[5px]"><Svg w={18} h={18}><path d="M2 1v6h6M2 7q5-7 10-3t-3 12" stroke="#aaa" strokeWidth="1.300" /></Svg></span><Chev />
          <span className="pl-[3px]"><Svg w={18} h={18}><path d="M14 1v6H8M14 7Q9 0 4 4t3 12" stroke="#aaa" strokeWidth="1.300" /></Svg></span><Chev />
        </div>
        <span className="pl-[2px]"><Svg w={8} h={10} vb="0 0 8 10"><path d="M0 2h8M1 5l3 3 3-3" stroke="#ccc" strokeWidth="1.300" /></Svg></span>
        <span className="ml-[232px] w-[304px] whitespace-pre">Book1  -  Excel</span>
        <label className="flex h-[23px] w-[368px] items-center gap-[15px] border border-[#5a5856] bg-[#2a2928] pl-[18px] text-[#6e6c6a]">
          <Svg w={16} h={16}><circle cx="10" cy="6" r="5" stroke="#6e6c6a" /><path d="M6 10l-5 5" stroke="#6e6c6a" /></Svg>
          <input aria-label="Search" placeholder="Search (Alt+Q)" className="min-w-0 flex-1 bg-transparent text-[11px] outline-none placeholder:text-[#5f5d5b]" />
        </label>
        <div className="relative ml-auto flex items-center pr-[9px]">
          <span className="pr-[11px] text-[12px]">M. A. Cabanlit</span>
          <span className="flex h-[24px] w-[24px] items-center justify-center rounded-full bg-[#d13438] text-white">MA</span>
          <span className="w-[53px] pl-[26px]"><Svg w={18} h={18}><path d="M2 15l-1-3 8-9 4 3-8 9zM11 2l1-2M13 4l3-2M14 6h2" stroke="#ccc" /></Svg></span>
          <span className="w-[50px] pl-[18px]"><Svg w={14} h={12} vb="0 0 16 14"><path d="M1 1h14v12H1zM1 4h14M8 12V6M5.500 8L8 6l2.500 2" stroke="#ccc" /></Svg></span>
          <span className="w-[46px] pl-[17px]"><Svg w={10} h={10} vb="0 0 10 10"><path d="M0 5h10" stroke="#ccc" /></Svg></span>
          <span className="w-[46px] pl-[17px]"><Svg w={10} h={11} vb="0 0 10 11"><path d="M.5 2.500h7v8h-7zM2.500 2V.5h7v8H8" stroke="#ccc" /></Svg></span>
          <span className="w-[36px] pl-[16px]"><Svg w={11} h={11} vb="0 0 10 10"><path d="M0 0l10 10M10 0L0 10" stroke="#ccc" /></Svg></span>
        </div>
      </header>
      <div className="flex h-[36px] items-center bg-[#323130] pl-[2px] text-[12px]">
        {excelTabs.map(([t, w]) => (
          <button key={t} className={"relative flex h-full items-center justify-center pb-[4px] whitespace-nowrap " + w + (t === "Home" ? " font-bold" : "")}>
            {t}
            {t === "Home" && <span className="absolute bottom-[9px] h-[3px] w-[38px] bg-white" />}
          </button>
        ))}
        <div className="mb-[6px] ml-auto flex gap-[9px] pr-[12px] font-semibold">
          <button className="flex h-[28px] w-[100px] items-center justify-center gap-[4px] rounded-[2px] border border-[#6a6866] bg-[#484644]"><Svg w={12} h={12}><path d="M1 1h14v10H7l-4 4v-4H1z" stroke="#fff" strokeWidth="1.300" /></Svg>Comments</button>
          <button className="flex h-[28px] w-[68px] items-center justify-center gap-[4px] rounded-[2px] border border-[#6a6866] bg-[#484644]"><Svg w={12} h={12}><path d="M5 5H1v10h12v-4M4 11q1-6 7-6V2l4 5-4 4V8q-5 0-7 3z" stroke="#fff" strokeWidth="1.300" /></Svg>Share</button>
        </div>
      </div>
      <ExcelRibbon />
      <div className="flex h-[46px] items-center gap-[3px] bg-[#262626] pl-[5px] text-[12px]">
        <div className="flex h-[26px] w-[102px] items-center justify-between border border-[#484644] bg-[#333] pr-[8px] pl-[6px]">T37<Tri c="#fff" s={8} /></div>
        <span className="w-[24px] text-center font-bold">⋮</span>
        <div className="flex h-[26px] w-[110px] items-center justify-between border border-[#484644] bg-[#333] px-[12px]">
          <Svg w={12} h={12}><path d="M2 2l12 12M14 2L2 14" stroke="#777" strokeWidth="2" /></Svg>
          <Svg w={14} h={13}><path d="M1 9l5 5 9-12" stroke="#777" strokeWidth="2.500" /></Svg>
          <span className="font-serif text-[14px] font-bold italic">f<span className="text-[10px]">x</span></span>
        </div>
        <input aria-label="Formula" className="h-[26px] flex-1 border border-[#484644] bg-[#333]" />
      </div>
      <Sheet />
      <div className="flex h-[28px] items-start border-t border-[#6a6a6a] bg-[#262626]">
        <span className="flex w-[100px] items-center gap-[23px] pt-[7px] pl-[27px]">
          <Svg w={5} h={9} vb="0 0 5 9"><path d="M5 0v9L0 4.500z" fill="#999" /></Svg>
          <Svg w={5} h={9} vb="0 0 5 9"><path d="M0 0v9l5-4.500z" fill="#999" /></Svg>
        </span>
        <button className="h-[25px] w-[64px] border-b-2 border-[#217346] bg-white text-[12px] font-bold text-[#217346]">Sheet1</button>
        <span className="pt-[5px] pl-[33px]"><Svg w={17} h={17} vb="0 0 18 18"><circle cx="9" cy="9" r="8" stroke="#ddd" strokeWidth="1.300" /><path d="M9 5v8M5 9h8" stroke="#fff" strokeWidth="2" /></Svg></span>
      </div>
      <div className="flex h-[23px] items-center bg-[#323130] pl-[8px] text-[11px]">
        <span>Ready</span>
        <span className="flex items-center gap-[3px] pl-[17px]"><Svg w={15} h={15}><circle cx="8" cy="3" r="2" stroke="#fff" /><path d="M2 5l4 1.500v3L4 15M14 5l-4 1.500v3M9 10l5 5M14 10l-5 5" stroke="#fff" /></Svg>Accessibility: Investigate</span>
        <div className="ml-auto flex items-center">
          <span className="pr-[6px]"><Svg w={14} h={14}><circle cx="5" cy="11" r="3" stroke="#fff" /><path d="M9 12l5-5v5" stroke="#fff" /></Svg></span>
          <span className="w-[160px]">Add-ins loaded successfully</span>
          <span className="flex w-[119px] items-center gap-[4px]"><Svg w={14} h={14}><path d="M1 2v7h4M7 2h8v5" stroke="#fff" /><circle cx="10" cy="11" r="3" stroke="#fff" /></Svg>Display Settings</span>
          <span className="flex h-[22px] w-[40px] items-center justify-center bg-[#605e5c]"><Svg w={13} h={12}><path d="M1 1h14v14H1zM1 6h14M1 11h14M6 1v14M11 1v14" stroke="#fff" /></Svg></span>
          <span className="flex w-[40px] justify-center"><Svg w={13} h={13}><path d="M1 1h14v14H1zM4 4h8v8H4zM6 6h4M6 8h4M6 10h4" stroke="#fff" /></Svg></span>
          <span className="flex w-[42px] justify-center"><Svg w={13} h={13}><path d="M1 1v14h14V1M6 1v8h4V1M1 9h5" stroke="#fff" /></Svg></span>
          <span className="flex w-[18px] justify-center">−</span>
          <span className="relative h-px w-[100px] bg-[#ccc]"><span className="absolute -top-[5px] left-[48px] h-[11px] w-[5px] bg-white" /></span>
          <span className="flex w-[24px] pl-[5px]">+</span>
          <span className="pr-[7px]">100%</span>
        </div>
      </div>
    </div>
  );
}

/* ---------- Paint ---------- */

const palette = [
  "bg-black", "bg-[#7f7f7f]", "bg-[#880015]", "bg-[#ed1c24]", "bg-[#ff7f27]", "bg-[#fff200]", "bg-[#22b14c]", "bg-[#00a2e8]", "bg-[#3f48cc]", "bg-[#a349a4]",
  "bg-white", "bg-[#c3c3c3]", "bg-[#b97a57]", "bg-[#ffaec9]", "bg-[#ffc90e]", "bg-[#efe4b0]", "bg-[#b5e61d]", "bg-[#99d9ea]", "bg-[#7092be]", "bg-[#c8bfe7]",
];

const shapes = [
  "M1 3l14 11", "M1 13Q5-2 8 8t7-4", "M8 1.500a6.500 6.500 0 1 0 .1 0z", "M1.500 2h13v12h-13z", "M4 2h8q2.500 0 2.500 2.500v7q0 2.500-2.500 2.500H4q-2.500 0-2.500-2.500v-7Q1.500 2 4 2z", "M2 14L6 2h7l-3 6h4v6z", "M8 2l6 12H2z",
  "M2 2v12h11z", "M8 1l6 7-6 7-6-7z", "M8 1.500l6.500 5L12 14.500H4L1.500 6.500z", "M8 1l6 3.500v7L8 15l-6-3.500v-7z", "M1 5h7V2l7 6-7 6v-3H1z", "M15 5H8V2L1 8l7 6v-3h7z", "M5 15V8H2l6-7 6 7h-3v7z",
  "M5 1v7H2l6 7 6-7h-3V1z", "M8 1l2 5 5 2-5 2-2 5-2-5-5-2 5-2z", "M8 1l2 5h5l-4 3.500L13 15l-5-3.500L3 15l2-5.500L1 6h5z", "M8 1l2 4h4l-2 3.500 2 3.500h-4l-2 3-2-3H2l2-3.500L2 5h4z", "M2 3h12v8H8l-4 3.500V11H2z", "M8 2a6.500 5 0 1 1-2 9.500l-3 3 .5-4Q1 8 2 5t6-3z", "M4 3q3-3 5-1 4-1 4 2 3 2 1 5 0 4-4 3-3 4-5 1-4 0-3-4-2-3 2-6z",
];

const PDiv = () => <span className="h-[84px] w-px shrink-0 bg-[#e0e2e4]" />;

function PGroup({ label, cls, children }: Kids & { label: string; cls: string }) {
  return (
    <div className={"flex shrink-0 flex-col " + cls}>
      <div className="flex h-[69px] items-start">{children}</div>
      <span className="text-center leading-[16px] text-[#7a7a7a]">{label}</span>
    </div>
  );
}

function PBtn({ l1, l2, cls, children }: Kids & { l1: string; l2?: string; cls: string }) {
  return (
    <button className={"flex shrink-0 flex-col items-center leading-[14px] " + cls}>
      <span className="flex h-[37px] items-center">{children}</span>
      <span className="whitespace-nowrap">{l1}</span>
      {l2 ? <span className="whitespace-nowrap">{l2}</span> : <Tri />}
    </button>
  );
}

function Paint() {
  return (
    <section aria-label="Paint" className="absolute top-[169px] right-[286px] bottom-[51px] left-[375px] flex flex-col overflow-hidden bg-[#f0f0f0] text-[10px] text-[#555] shadow-[0_0_10px_rgba(0,0,0,0.5)]">
      <header className="flex h-[30px] shrink-0 items-center border-b border-[#9a9a9a] bg-white">
        <div className="flex items-center gap-[7px] pl-[5px]">
          <AppIcon name="paint" s={19} />
          <span className="h-[13px] w-px bg-[#aaa]" />
          <span><Svg w={13} h={14}><path d="M1 1h14v14H1z" fill="#7a50a8" /><path d="M4 1h8v7H4z" fill="#f2ecf8" /><path d="M5 10h6v5H5z" fill="#d9cde8" /></Svg></span>
          <Svg w={13} h={14}><path d="M3 1v6h6M4 6q6-4 8 1t-4 8" stroke="#9aabcb" strokeWidth="3" /></Svg>
          <Svg w={13} h={14}><path d="M13 1v6H7M12 6Q6 2 4 7t4 8" stroke="#b4c2da" strokeWidth="3" /></Svg>
          <Svg w={7} h={8} vb="0 0 8 8"><path d="M0 1h8" stroke="#333" /><path d="M0 3h8L4 7z" fill="#333" /></Svg>
          <span className="ml-[3px] h-[13px] w-px bg-[#aaa]" />
        </div>
        <h2 className="pl-[6px] text-[11px] text-[#999]">Untitled - Paint</h2>
        <div className="ml-auto flex gap-[35px] pr-[66px]">
          <Svg w={10} h={10} vb="0 0 10 10"><path d="M0 5.500h10" stroke="#888" /></Svg>
          <Svg w={10} h={10} vb="0 0 10 10"><path d="M.5.500h9v9h-9z" stroke="#888" /></Svg>
        </div>
      </header>
      <div className="flex h-[22px] shrink-0 bg-white">
        <button className="w-[56px] bg-[#1979ca] text-white">File</button>
        <button className="w-[55px] border-r border-[#e0e2e4] bg-[#f5f6f7]">Home</button>
        <button className="w-[51px] text-center">View</button>
      </div>
      <div className="flex h-[90px] shrink-0 items-start border-t border-[#e8e8e8] bg-[#f5f6f7] pt-[3px]">
        <PGroup label="Clipboard" cls="w-[99px]">
          <PBtn l1="Paste" cls="w-[50px]"><Svg w={26} h={32} vb="0 0 26 32"><rect x="1" y="2" width="24" height="29" rx="2" fill="#b8864a" /><path d="M4 6h18v22H4z" fill="#fff" /><path d="M6 11h14M6 15h14M6 19h14M6 23h14" stroke="#a9bdd3" /><path d="M8 5V2h3q2-3 4 0h3v3z" fill="#8a8f96" /></Svg></PBtn>
          <div className="flex flex-col text-[#a8a8a8]">
            <span className="flex h-[21px] items-center gap-[3px]"><Svg w={14} h={14}><path d="M4 1l6 10M12 1L6 11" stroke="#9ab" strokeWidth="1.500" /><circle cx="5" cy="13" r="2" stroke="#9ab" strokeWidth="1.500" /><circle cx="11" cy="13" r="2" stroke="#9ab" strokeWidth="1.500" /></Svg>Cut</span>
            <span className="flex h-[20px] items-center gap-[3px]"><Svg w={14} h={14}><path d="M1 1h7l2 2v8H1zM6 5h6l3 3v7H6z" fill="#e3ebf4" stroke="#b2c3d9" /></Svg>Copy</span>
          </div>
        </PGroup>
        <PDiv />
        <PGroup label="Image" cls="w-[111px]">
          <PBtn l1="Select" cls="w-[45px]"><Svg w={28} h={23} vb="0 0 28 23"><path d="M1 1h26v21H1z" stroke="#4a86c0" fill="#f4f8fc" strokeDasharray="2 1" /></Svg></PBtn>
          <div className="flex flex-col">
            <span className="flex h-[21px] items-center gap-[3px] text-[#a8a8a8]"><Svg w={15} h={15}><path d="M4 0v12h12M0 4h12v12M4 12L15 1" stroke="#9ab0cc" strokeWidth="1.500" /></Svg>Crop</span>
            <span className="flex h-[20px] items-center gap-[3px]"><Svg w={15} h={14}><path d="M6 1h9v9H6z" fill="#f3f8fc" stroke="#4a86c0" /><path d="M1 7h7v7H1z" fill="#dbe9f5" stroke="#4a86c0" strokeWidth="1.500" /></Svg>Resize</span>
            <span className="flex h-[21px] items-center gap-[3px]"><Svg w={15} h={15}><path d="M9 3v12h7z" fill="#2a6fae" /><path d="M7 8v7H0z" fill="#9ac0e0" /><path d="M1 6q0-4 5-4" stroke="#2a8fd8" strokeWidth="1.500" /></Svg>Rotate<Tri s={6} /></span>
          </div>
        </PGroup>
        <PDiv />
        <PGroup label="Tools" cls="w-[75px]">
          <div className="grid w-full grid-cols-3 justify-items-center gap-y-[11px] pt-[10px] pl-[4px]">
            <Svg w={17} h={17}><path d="M1 15l2-4 9-9 3 2-10 9z" fill="#e8c46a" stroke="#8a6a2a" strokeWidth=".7" /><path d="M11 3l2-2 3 3-2 2z" fill="#d07070" /></Svg>
            <Svg w={17} h={17}><path d="M5 7l5-5 5 6-6 6z" fill="#c6dcf0" stroke="#6d93b8" /><path d="M1 15V8l4-4-1 9z" fill="#e8652a" /></Svg>
            <span className="font-['Liberation_Serif',serif] text-[20px] leading-[17px] font-bold text-[#2c4566]">A</span>
            <Svg w={17} h={17}><path d="M7 3l8-1-6 11-8 2z" fill="#f0a0a0" stroke="#d87a7a" /></Svg>
            <Svg w={17} h={17}><path d="M1 15l2-4 6-6 2 2-6 6z" fill="#c9dbea" stroke="#567" strokeWidth=".7" /><path d="M8 4l4 4M10 5l3-4 2 2-4 3z" stroke="#2e5f9a" strokeWidth="2.500" /></Svg>
            <Svg w={17} h={17}><circle cx="7" cy="6" r="5" fill="#e3f0fa" stroke="#8fa6ba" strokeWidth="1.500" /><path d="M10 10l4 5" stroke="#a87a4a" strokeWidth="3" /></Svg>
          </div>
        </PGroup>
        <PDiv />
        <div className="flex h-[84px] w-[49px] shrink-0 justify-center">
          <PBtn l1="Brushes" cls="h-[64px] w-[40px] border border-[#8fbce6] bg-[#cbe1f7]"><Svg w={32} h={32} vb="0 0 32 32"><path d="M.5.500h31v31H.5z" fill="#f4f7fa" stroke="#9ab" /><path d="M12 5Q0 10 4 22q2 4 6 5" stroke="#e2562a" strokeWidth="5" /><path d="M11 28q0-8 8-10l5 5q-4 8-13 5z" fill="#a87442" /><path d="M21 19L31 3" stroke="#6b7a88" strokeWidth="3" /></Svg></PBtn>
        </div>
        <PDiv />
        <PGroup label="Shapes" cls="w-[227px]">
          <div className="mt-[2px] ml-[4px] grid h-[59px] w-[136px] grid-cols-7 place-items-center border border-[#dde3ea] bg-[#fcfdfe]">
            {shapes.map((d) => <Svg key={d} w={17} h={17}><path d={d} stroke="#4a80b5" fill={d.endsWith("z") ? "#eef5fb" : "none"} strokeWidth="1.200" /></Svg>)}
          </div>
          <div className="mt-[2px] flex h-[59px] w-[14px] flex-col items-center justify-around border border-[#e3e6ea]">
            <Svg w={6} h={6} vb="0 0 8 8"><path d="M0 6h8L4 2z" fill="#aaa" /></Svg>
            <Tri s={6} />
            <Svg w={8} h={8} vb="0 0 8 8"><path d="M0 1h8" stroke="#222" /><path d="M0 3h8L4 7z" fill="#222" /></Svg>
          </div>
          <div className="flex flex-col pl-[5px] text-[#a0a0a0]">
            <span className="flex h-[21px] items-center gap-[3px]"><Svg w={15} h={15}><path d="M1 4h9M1 4v11h9M4 11l8-9 3 2-8 9z" stroke="#9ab0cc" /></Svg>Outline<Tri s={6} c="#aaa" /></span>
            <span className="flex h-[20px] items-center gap-[3px]"><Svg w={15} h={15}><path d="M4 6l4-4 5 5-5 5z" fill="#cfdbe8" stroke="#9ab0cc" /><path d="M0 15q2-6 4-8l4 5 5-4 3 7z" fill="#b4c6d9" /></Svg>Fill<Tri s={6} c="#aaa" /></span>
          </div>
        </PGroup>
        <PDiv />
        <PBtn l1="Size" cls="w-[49px]"><Svg w={32} h={32} vb="0 0 32 32"><path d="M0 1.500h32" stroke="#1f3a5f" /><path d="M0 7h32" stroke="#1f3a5f" strokeWidth="2" /><path d="M0 11h32" stroke="#1f3a5f" /><path d="M0 17h32" stroke="#1f3a5f" strokeWidth="4" /><path d="M0 28h32" stroke="#1f3a5f" strokeWidth="8" /></Svg></PBtn>
        <PDiv />
        <PGroup label="Colors" cls="w-[346px]">
          <PBtn l1="Color" l2="1" cls="ml-[3px] h-[66px] w-[41px] border border-[#8fbce6] bg-[#cbe1f7]"><span className="h-[31px] w-[31px] border-2 border-white bg-black outline outline-[#888]" /></PBtn>
          <PBtn l1="Color" l2="2" cls="w-[37px]"><span className="h-[24px] w-[24px] border-2 border-[#bbb] bg-white" /></PBtn>
          <div className="grid grid-cols-10 gap-[2px] pt-[1px] pl-[1px]">
            {Array.from({ length: 30 }, (_, i) => (
              <button key={i} aria-label={"Color swatch " + (i + 1)} className={"h-[20px] w-[20px] border-2 border-[#c4c4c4] " + (palette[i] ?? "bg-[#f5f6f7]")} />
            ))}
          </div>
          <PBtn l1="Edit" l2="colors" cls="w-[42px]"><Svg w={28} h={30} vb="0 0 28 30"><defs><linearGradient id="hue"><stop offset="0" stopColor="#f33" /><stop offset=".2" stopColor="#fe3" /><stop offset=".4" stopColor="#3d3" /><stop offset=".6" stopColor="#2df" /><stop offset=".8" stopColor="#33e" /><stop offset="1" stopColor="#e3d" /></linearGradient><linearGradient id="fade" x2="0" y2="1"><stop offset=".3" stopColor="#777" stopOpacity="0" /><stop offset="1" stopColor="#777" stopOpacity=".8" /></linearGradient></defs><path d="M1 1h26v28H1z" fill="url(#hue)" stroke="#aaa" /><path d="M1 1h26v28H1z" fill="url(#fade)" /></Svg></PBtn>
        </PGroup>
        <PDiv />
        <PBtn l1="Edit with" l2="Paint 3D" cls="w-[50px]"><Svg w={30} h={30} vb="0 0 30 30"><defs><linearGradient id="drop" x2="1" y2="1"><stop offset="0" stopColor="#27b8f5" /><stop offset=".5" stopColor="#9a5cf0" /><stop offset="1" stopColor="#ff6a4a" /></linearGradient></defs><path d="M.5.500h29v29H.5z" fill="#fcfcfc" stroke="#ccc" /><path d="M15 27Q7 16 7 11a8 8 0 0 1 16 0q0 5-8 16z" fill="url(#drop)" /><circle cx="13" cy="9" r="4" fill="#6fe0ee" opacity=".7" /></Svg></PBtn>
        <PDiv />
      </div>
      <div className="relative min-h-0 flex-1 border-t border-[#c3cde0] bg-linear-to-b from-[#c8d2e4] to-[#dce6f3] pt-[4px] pl-[4px]">
        <div className="relative h-[518px] w-[921px] bg-white shadow-[4px_4px_4px_rgba(100,115,140,0.4)]">
          <span className="absolute top-[257px] -right-[4px] h-[4px] w-[4px] border border-[#555] bg-white" />
          <span className="absolute -bottom-[4px] left-[459px] h-[4px] w-[4px] border border-[#555] bg-white" />
          <span className="absolute -right-[4px] -bottom-[4px] h-[4px] w-[4px] border border-[#555] bg-white" />
        </div>
      </div>
      <footer className="flex h-[26px] shrink-0 items-center border-t border-[#e4e4e4] bg-[#f0f0f0] text-[11px]">
        <span className="flex h-full w-[160px] items-center border-r border-[#dcdcdc] pl-[2px]"><Svg w={14} h={14}><path d="M8 0v16M0 8h16M6 2l2-2 2 2M6 14l2 2 2-2M2 6L0 8l2 2M14 6l2 2-2 2" stroke="#345" /></Svg></span>
        <span className="flex h-full w-[160px] items-center border-r border-[#dcdcdc] pl-[4px]"><Svg w={14} h={14}><path d="M3 3h12v12H3zM0 1h3M1 0v3" stroke="#789" strokeDasharray="2 1" /></Svg></span>
        <span className="flex h-full w-[160px] items-center gap-[4px] border-r border-[#dcdcdc] pl-[5px] whitespace-nowrap"><Svg w={14} h={14}><path d="M3 2h12v12H3z" fill="#fff" stroke="#789" /><path d="M1 2v13h12" stroke="#567" /></Svg>1152 × 648px</span>
        <span className="h-full w-[160px] border-r border-[#dcdcdc]" />
        <span className="h-full flex-1 border-r border-[#dcdcdc]" />
        <div className="flex w-[215px] items-center pl-[19px]">
          <span className="w-[34px]">100%</span>
          <Svg w={17} h={17}><circle cx="8" cy="8" r="7" fill="#f4f4f4" stroke="#999" /><path d="M4 8h8" stroke="#555" strokeWidth="1.500" /></Svg>
          <span className="relative ml-[10px] h-[3px] w-[90px] bg-[#d8d8d8]"><span className="absolute -top-[8px] left-[37px]"><Svg w={11} h={18} vb="0 0 11 18"><path d="M0 0h11v13l-5.500 5L0 13z" fill="#0078d7" /></Svg></span></span>
        </div>
      </footer>
    </section>
  );
}

/* ---------- Search window ---------- */

const results: [string, string, string, string, string?][] = [
  ["Dissolve", " (Coverage)", "Creates a new coverage by merging adjacent polygons, lines,...", "toolboxes\\system toolboxes\\coverage tools.tbx\\data manage..."],
  ["Dissolve", " (Data Management)", "Aggregates features based on specified attributes.", "toolboxes\\system toolboxes\\data management tools.tbx\\gene..."],
  ["Dissolve", " Network (Network Analyst)", "Creates a network dataset that minimizes the number of line f...", "toolboxes\\system toolboxes\\network analyst tools.tbx\\networ..."],
  ["Dissolve", " Route Events (Linear Referencing)", "Removes redundant information from event tables or separat...", "toolboxes\\system toolboxes\\linear referencing tools.tbx\\", "disso"],
  ["", "Unsplit Line (Data Management)", "Merges lines that have coincident endpoints and, optionally, co...", "toolboxes\\system toolboxes\\data management tools.tbx\\featu..."],
  ["", "Eliminate (Data Management)", "Eliminates polygons by merging them with neighboring polygo...", "toolboxes\\system toolboxes\\data management tools.tbx\\gene..."],
  ["", "Multiple Ring Buffer (Analysis)", "Creates multiple buffers at specified distances around the inpu...", "toolboxes\\system toolboxes\\analysis tools.tbx\\proximity\\multi..."],
];

const hammer = <><path d="M6 5l9 10" stroke="#b9b0a0" strokeWidth="3" /><path d="M1 6q1-4 6-5l5 1-4 2-2 3z" fill="#555" /></>;
const arrowBlue = <path d="M1 8l6-6v3.500h8v5H7V14z" fill="#2f63c8" />;

function SearchWindow() {
  return (
    <section aria-label="Search" className="absolute top-[121px] right-px bottom-[57px] flex w-[339px] flex-col border-2 border-[#f0f0f0] bg-[#f0f0f0] font-['DejaVu_Sans',sans-serif] text-[9px] text-[#222] shadow-[0_1px_0_#222]">
      <header className="flex h-[21px] items-center bg-linear-to-r from-[#bccad9] to-[#d6e4f1] pl-[4px] font-['Open_Sans',sans-serif] text-[11px]">
        <h2>Search</h2>
        <span className="ml-auto flex gap-[6px] pr-[3px]">
          <Svg w={8} h={8} vb="0 0 8 8"><path d="M.5 1h7v6.500h-7z" stroke="#111" strokeWidth="1.500" /></Svg>
          <Svg w={8} h={8} vb="0 0 8 8"><path d="M1 1l6 6M7 1L1 7" stroke="#111" strokeWidth="1.500" /></Svg>
        </span>
      </header>
      <div className="flex h-[24px] items-center gap-[4px] pl-[4px]">
        <Svg w={12} h={13}>{arrowBlue}</Svg>
        <Svg w={12} h={13}><path d="M15 8L9 2v3.500H1v5h8V14z" fill="#aaa" /></Svg>
        <span className="ml-[2px] h-[18px] w-px bg-[#aaa]" />
        <Svg w={14} h={14}><path d="M0 8l8-8 8 8h-3v8H3V8z" fill="#5e8fd6" /><path d="M5 9h2v3H5zM9 9h3v7H9z" fill="#e6effa" /></Svg>
        <Svg w={14} h={14}><path d="M2 7q2-5 8-4V0l5 4-5 4V5Q5 5 4 7zM14 9q-2 5-8 4v3l-5-4 5-4v3q5 0 6-2z" fill="#4c86d6" /></Svg>
        <span className="ml-[2px] h-[18px] w-px bg-[#aaa]" />
        <Svg w={12} h={13}><path d="M1 1h14v14H1z" fill="#fff" stroke="#999" /><path d="M3 4h2M3 8h2M3 12h2" stroke="#333" strokeWidth="1.500" /><path d="M7 4h6M7 8h6M7 12h6" stroke="#69c" strokeWidth="1.500" /></Svg>
        <Tri c="#111" s={8} />
        <label className="relative ml-[2px] flex h-[19px] flex-1 items-center border border-[#b5b5b5] bg-[#e1e1e1]">
          <select aria-label="Search source" className="w-full appearance-none bg-transparent px-[2px] font-['Open_Sans',sans-serif] text-[9px] outline-none"><option>Local Search</option></select>
          <span className="pointer-events-none absolute right-[3px]"><Chev c="#666" /></span>
        </label>
      </div>
      <div className="flex min-h-0 flex-1">
        <div className="flex min-w-0 flex-1 flex-col border-t border-[#c5c5c5] bg-white">
          <div className="flex h-[65px] flex-col pt-[5px] pl-[8px] text-[#2a6fc9]">
            <div className="flex h-[13px] text-[9px]">
              <b className="w-[34px] text-[#111]">ALL</b>
              <a href="#maps" className="w-[38px] underline">Maps</a>
              <a href="#data" className="w-[37px] underline">Data</a>
              <a href="#tools" className="underline">Tools</a>
            </div>
            <div className="mt-[3px] flex items-center gap-[8px]">
              <input aria-label="Search text" defaultValue="dissolve" className="h-[19px] w-[268px] border border-[#bbb] border-t-[#555] border-l-[#555] px-[2px] font-['Liberation_Sans',sans-serif] text-[13px] text-[#33407c] outline-none" />
              <button aria-label="Go"><Svg w={18} h={18}><circle cx="8" cy="8" r="7.500" fill="#cfe6f7" stroke="#a5cbe8" /><circle cx="7" cy="7" r="3" stroke="#2a7ab8" strokeWidth="1.300" /><path d="M9 9l3 3" stroke="#2a7ab8" strokeWidth="1.500" /></Svg></button>
            </div>
            <a href="#extent" className="flex h-[17px] items-center gap-[3px] text-[10px]"><span className="underline">Any Extent</span><Tri c="#111" s={6} /></a>
          </div>
          <div className="z-10 flex h-[19px] items-center justify-between border-y border-[#c5c5c5] bg-[#f0f0f0] pr-[9px] pl-[8px] text-[#2a6fc9]">
            <a href="#results" className="flex items-center gap-[3px]"><span className="underline">Search returned 7 items</span><Tri c="#111" s={6} /></a>
            <a href="#sort" className="flex items-center gap-[3px]"><span className="underline">Sort By</span><Tri c="#111" s={6} /></a>
          </div>
          <ul className="-mt-[4px] flex-1">
            {results.map(([bold, title, desc, path, hit], i) => (
              <li key={i} className={i % 2 ? "flex h-[52px] items-start gap-[4px] bg-[#ededed] pt-[3px] pl-[4px]" : "flex h-[52px] items-start gap-[4px] bg-white pt-[3px] pl-[4px]"}>
                <Svg w={13} h={13}>{i === 6 ? <><path d="M4 2h10v3H9q4 5 0 8H2q4-2 3-5T4 2z" fill="#9cc8f0" stroke="#3a7fc0" /></> : hammer}</Svg>
                <div className="min-w-0 whitespace-nowrap">
                  <p className={i === 0 ? "text-[10px] leading-[14px] text-[#9a2a9a]" : "text-[10px] leading-[14px] text-[#2a6fc9]"}><b>{bold}</b>{title} <span className="text-[9px] text-[#2e8b2e]">(Tool)</span></p>
                  <p className="text-[9px] leading-[15px] text-[#33507a]">{desc}</p>
                  <p className="text-[9px] leading-[15px] text-[#1f8f1f]">{path}{hit && <><b className="text-[#107010]">{hit}</b>...</>}</p>
                </div>
              </li>
            ))}
          </ul>
        </div>
        <div className="flex w-[15px] flex-col items-center justify-between py-[10px]">
          <Svg w={11} h={9} vb="0 0 12 9"><path d="M1 8l5-6 5 6" stroke="#aaa" strokeWidth="2" /></Svg>
          <span className="-mb-[10px]"><Svg w={11} h={9} vb="0 0 12 9"><path d="M1 1l5 6 5-6" stroke="#aaa" strokeWidth="2" /></Svg></span>
        </div>
      </div>
      <div className="mr-[15px] border-t border-[#c5c5c5] pt-[5px]">
        <p className="text-center text-[8px] leading-[11px] text-[#f33]">1</p>
        <div className="flex h-[16px] items-center gap-[6px] pr-[11px] pl-[12px]">
          <Svg w={8} h={12} vb="0 0 8 12"><path d="M7 1L2 6l5 5" stroke="#555" strokeWidth="2" /></Svg>
          <span className="h-full flex-1 bg-[#cdcdcd]" />
          <Svg w={8} h={12} vb="0 0 8 12"><path d="M1 1l5 5-5 5" stroke="#555" strokeWidth="2" /></Svg>
        </div>
      </div>
    </section>
  );
}

/* ---------- ArcMap toolbar icons (16 x 16) ---------- */

const gray = "#aaa";
const win16 = <><path d="M1 2h14v12H1z" fill="#fff" stroke="#3e5f8a" /><path d="M1 1.500h14v3H1z" fill="#3a6fb5" /></>;
const sheetList = <><path d="M2 1h12v14H2z" fill="#fff" stroke="#5a6778" /><path d="M4 4h2M4 8h2M4 12h2" stroke="#234" strokeWidth="2" /><path d="M8 4h4M8 8h4M8 12h4" stroke="#478" strokeWidth="1.300" /></>;

const tools: Record<string, React.ReactNode> = {
  new: <path d="M3 1h7l3 3v11H3zM10 1v3h3" fill="#fff" stroke="#445" />,
  open: <><path d="M1 5h5l1 2h6v8H1z" fill="#e8b94a" stroke="#8a6a1a" /><path d="M3 9h13l-3 6H1z" fill="#fbdc84" stroke="#8a6a1a" /><path d="M9 4q2-3 5-1M12 1l3 2-2 3" stroke="#2a5fae" strokeWidth="1.300" /></>,
  save: <><path d="M1 1h14v14H1z" fill="#57491c" /><path d="M4 2h8v5H4z" fill="#f4f0dc" /><path d="M4 10h8v5H4z" fill="#c9b458" /></>,
  print: <><path d="M4 1h8v5H4z" fill="#fff" stroke="#333" /><path d="M1 6h14v6H1z" fill="#bbb" stroke="#333" /><path d="M4 10h8v5H4z" fill="#fff" stroke="#333" /></>,
  cut: <path d="M4 1l5 9M12 1L7 10M5 11a2 2 0 1 0 .1 0M11 11a2 2 0 1 0 .1 0" stroke={gray} strokeWidth="1.300" />,
  copy: <path d="M1 1h8v10H1zM6 5h8v10H6zM8 8h4M8 11h4" fill="#eee" stroke={gray} />,
  paste: <><path d="M2 2h11v13H2z" fill="#8a7048" /><path d="M5 1h5v3H5z" fill="#ccc" stroke="#555" /><path d="M7 7h8v8H7z" fill="#fff" stroke="#345" /><path d="M9 9.500h4M9 12h4" stroke="#69a" /></>,
  del: <path d="M3 3l10 10M13 3L3 13" stroke={gray} strokeWidth="2.500" />,
  undo: <path d="M2 3v5h5M2 8q5-7 9-3t-2 9" stroke="#23579c" strokeWidth="2" />,
  redo: <path d="M14 3v5H9M14 8Q9 1 5 5t2 9" stroke={gray} strokeWidth="2" />,
  add: <><path d="M8 6l7 4-7 6-7-6z" fill="#f3c55a" stroke="#a87c1c" /><path d="M8 0v11M3 5h10" stroke="#111" strokeWidth="2.500" /></>,
  edit: <><path d="M1 13h14M4 13v-3M9 13V9M14 13v-3" stroke="#222" strokeWidth="1.500" /><path d="M7 8l6-7 2 2-6 7z" fill="#f0a050" stroke="#863" strokeWidth=".5" /><path d="M1 11h3v3H1zM12 12h3v3h-3z" fill="#222" /></>,
  toc: <>{win16}<path d="M3 7h2M3 9.500h2M3 12h2" stroke="#c60" /><path d="M6 7h7M6 9.500h7M6 12h7" stroke="#26a" /></>,
  catalog: <>{win16}<path d="M6 7h7v8H6z" fill="#e0c030" stroke="#874" /><path d="M4 11h5v4H4z" fill="#5a8a3a" /></>,
  searchwin: <>{win16}<circle cx="9" cy="10" r="4" fill="#5aa8d8" stroke="#3a7" /></>,
  toolbox: <>{win16}<path d="M4 8l5-2 6 3v5l-5 2-6-4z" fill="#c8342a" stroke="#701a14" /></>,
  python: <>{win16}<path d="M3 6l3 2-3 2" stroke="#222" /></>,
  model: <><path d="M1 1h5v4H1zM1 11h5v4H1z" fill="#6ab0e8" stroke="#1c4f86" /><path d="M11 6h4v4h-4z" fill="#8bc34a" stroke="#365" /><path d="M3 5v6M3 8h7" stroke="#222" /><path d="M6 6h3v4H6z" fill="#f3c55a" /></>,
  zoomin: <><circle cx="7" cy="7" r="5" fill="#fff" stroke="#222" strokeWidth="1.300" /><path d="M7 4.500v5M4.500 7h5" stroke="#111" strokeWidth="1.500" /><path d="M11 11l4 4" stroke="#964a20" strokeWidth="2.500" /></>,
  zoomout: <><circle cx="7" cy="7" r="5" fill="#fff" stroke="#444" strokeWidth="1.300" /><path d="M4.500 7h5" stroke="#111" strokeWidth="1.500" /><path d="M11 11l4 4" stroke="#964a20" strokeWidth="2.500" /></>,
  pan: <path d="M5 15L1 8l2-1 2 3-1-7h2l1 5V1h2v7l1-6h2v7l1-4h2l-2 10z" fill="#fff" stroke="#555" />,
  globe: <><circle cx="8" cy="8" r="7" fill="#2e6fb0" stroke="#223" /><path d="M4 3q4-3 7 0l-3 4-2 5-3-4zM11 8l3 1-2 4z" fill="#7fc04a" /></>,
  fixin: <path d="M1 1l5 5M6 2v4H2M15 1l-5 5M10 2v4h4M1 15l5-5M2 10h4v4M15 15l-5-5M14 10h-4v4" stroke="#111" strokeWidth="1.500" />,
  fixout: <path d="M2 2l4 4M2 5V2h3M14 2l-4 4M11 2h3v3M2 14l4-4M2 11v3h3M14 14l-4-4M14 11v3h-3" stroke="#111" strokeWidth="1.500" />,
  back: arrowBlue,
  fwd: <path d="M15 8L9 2v3.500H1v5h8V14z" fill={gray} />,
  select: <><path d="M1 2h7v8H1zM8 2l6 0v6z" fill="#6cc7de" stroke="#356" /><path d="M5 3v11l3-3 2 4 2-1-2-4h4z" fill="#fff" stroke="#111" /></>,
  clear: <path d="M2 1h12v13H2zM5 3l6 5M8 5v5" stroke={gray} />,
  pointer: <path d="M4 0v14l3.500-3 2.500 5 2-1-2.500-5H14z" fill="#111" />,
  info: <><circle cx="8" cy="8" r="7" fill="#1f5fc0" stroke="#0c3a80" /><path d="M8 7v6" stroke="#fff" strokeWidth="2.500" /><circle cx="8" cy="4" r="1.400" fill="#fff" /></>,
  bolt: <path d="M11 0L4 8h3l-3 8 8-10H9z" fill="#ddd" stroke={gray} />,
  html: <><path d="M1 1h14v10H8l-3 4v-4H1z" fill="#e8f1fa" stroke="#345" /><path d="M4 4h3v3H4z" fill="#26a" /><path d="M9 4.500h4M9 7h4M4 9h9" stroke="#345" /></>,
  measure: <><path d="M1 9h14v5H1z" fill="#f0cd70" stroke="#a60" /><path d="M4 9v2M7 9v2M10 9v2M13 9v2" stroke="#a60" /><path d="M1 4h14M4 1L1 4l3 3M12 1l3 3-3 3" stroke="#1f5fc0" strokeWidth="1.500" /></>,
  binoc: <path d="M3 1h3v4h4V1h3l2 9v5h-5v-4H6v4H1v-5z" fill="#222" />,
  route: <path d="M9 2h5v4M11 1v4M2 14V8h9v6M5 11h4M4 14h4M11 9h4v5h-4z" stroke="#236a9c" strokeWidth="1.300" />,
  xy: <><circle cx="8" cy="4" r="3" stroke="#26a" /><path d="M8 0v8M4 4h8" stroke="#26a" /><text x="8" y="16" textAnchor="middle" fontSize="9" fontWeight="700" fill="#1f4f8a">XY</text></>,
  time: <><path d="M1 1h14v14H1z" fill="#e8e8e8" stroke={gray} /><circle cx="9" cy="9" r="4.500" stroke={gray} /><path d="M9 6v3h2" stroke={gray} /></>,
  viewer: <>{win16}<circle cx="8" cy="9" r="3.500" fill="#fff" stroke="#222" /><path d="M8 7v4M6 9h4M11 12l4 4" stroke="#222" /></>,
  tree: <><path d="M1 1h5v4H1zM5 7h5v4H5zM5 12h5v4H5z" fill="#f0c060" stroke="#a87c1c" strokeWidth=".6" /><path d="M11 9h4M11 14h4M3 5v9h2" stroke="#456" /></>,
  cyl: <><path d="M4 2v8q4 2 8 0V2z" fill="#8f9db0" stroke="#445" /><ellipse cx="8" cy="2.500" rx="4" ry="1.500" fill="#cfd8e4" /><path d="M3 10l5 5 5-5-5 2z" fill="#f0c060" stroke="#a87c1c" /></>,
  layer: <><path d="M8 5l7 5-7 6-7-6z" fill="#dfe4ea" stroke="#667" /><path d="M8 0l7 6-7 6-7-6z" fill="#f3b44c" stroke="#a87c1c" /></>,
  layersel: <><path d="M3 1h10v9H3z" fill="#5cc4dc" stroke="#345" /><path d="M7 2h5v7H7z" fill="#e8f6fa" /><path d="M2 10l6 5 6-5-6 2z" fill="#f0c060" stroke="#a87c1c" /></>,
  list: sheetList,
  related: <><path d="M1 1h9v6H1zM5 9h9v6H5z" fill="#7ec8d8" stroke="#223" /><path d="M12 2v5M10 5l2 2 2-2M2 9v4h2" stroke="#111" strokeWidth="1.300" /></>,
  selattr: <><path d="M1 1h7v9H1z" fill="#4fc3dc" stroke="#345" /><path d="M6 6h9v9H6z" fill="#fff" stroke="#223" /><path d="M6 9h9M6 12h9M9 6v9M12 6v9" stroke="#223" /></>,
  switch: <><path d="M1 1h14v14H1z" fill="#6bc7dc" stroke="#345" /><path d="M8 1l3 7-5 7h9V1z" fill="#e8f4f8" /><path d="M3 6v6M1.500 10L3 12l1.500-2M12 10V4M10.500 6L12 4l1.500 2" stroke="#114" strokeWidth="1.300" /></>,
  zoomsel: <><path d="M7 1h8v9H7z" fill="#ddd" stroke={gray} /><circle cx="6" cy="9" r="4" fill="#eee" stroke={gray} /><path d="M3 14l-2 2M4 9h4M6 7v4" stroke={gray} /></>,
  filter: <><path d="M0 1h11L7 6v8L4 12V6z" fill="#ccc" stroke={gray} /><path d="M10 8h5M10 11h5M10 14h5" stroke={gray} /></>,
  org: <path d="M1 1h8v8H1zM6 5h9v10H6zM6 8h9M8 11h5M8 13h5" fill="#e8e8e8" stroke={gray} />,
  lens: <><circle cx="8" cy="8" r="7.500" fill="#ddd" stroke="#bbb" /><circle cx="7" cy="7" r="3" stroke="#888" strokeWidth="1.300" /><path d="M9 9l3 4" stroke="#888" strokeWidth="1.500" /></>,
  lensoff: <><circle cx="8" cy="8" r="7.500" fill="#ddd" stroke="#bbb" /><circle cx="9" cy="6" r="3" stroke="#888" strokeWidth="1.300" /><path d="M11 8l2 4M3 8l5 5M8 8l-5 5" stroke="#777" strokeWidth="1.500" /></>,
  create: <><path d="M1 1h11v14H1z" fill="#f4f8fc" stroke="#3a5a7a" /><path d="M3 4h2v2H3zM3 10h2v2H3z" fill="#2a7a4a" /><path d="M7 5h3M7 11h3" stroke="#26a" /><path d="M6 10l7-9 3 2-8 9z" fill="#f0a860" stroke="#a55" strokeWidth=".6" /></>,
  results: <>{win16}<path d="M6 9l6 6" stroke="#a87a4a" strokeWidth="2" /><path d="M3 10l4-4 3 1-4 5z" fill="#444" /></>,
  sketch: <><path d="M1 1h14v14H1z" fill="#fff" stroke="#3a5a7a" /><path d="M4 11l4-6 4 6" stroke="#2a9a3a" strokeWidth="1.500" /><path d="M3 10h2v2H3zM7 4h2v2H7z" fill="#0a7a2a" /><path d="M11 10h2v2h-2z" fill="#d22" /></>,
};

function Tool({ n }: { n: string }) {
  if (n === "|") return <span className="flex w-[6px] justify-center"><span className="h-[18px] w-px bg-[#b8b8b8]" /></span>;
  if (n === "v") return <span className="flex w-[11px] justify-center"><Tri c="#111" s={6} /></span>;
  const active = n === "pointer" || n === "tree";
  return (
    <button aria-label={n} className={active ? "flex h-[22px] w-[22px] items-center justify-center border-2 border-[#1a7bd0] bg-[#cce4f7]" : "flex h-[22px] w-[22px] items-center justify-center"}>
      <Svg w={active ? 15 : 16}>{tools[n]}</Svg>
    </button>
  );
}

const Grip = () => <span className="mr-[2px] ml-[4px] h-[18px] w-[4px] border-l-2 border-dotted border-[#bbb]" />;
const Overflow = () => (
  <span className="ml-[2px] flex h-full w-[11px] items-end justify-center rounded-r-[2px] bg-[#c4c4c4] pb-[3px]">
    <Svg w={7} h={8} vb="0 0 8 8"><path d="M0 1h8" stroke="#111" strokeWidth="1.500" /><path d="M0 3h8L4 7z" fill="#111" /></Svg>
  </span>
);

const Pin = () => <Svg w={9} h={12} vb="0 0 9 12"><path d="M2.500 1h4v5h-4zM5.500 1v5M0 6.500h9M4.500 7v5" stroke="#111" strokeWidth="1.200" /></Svg>;
const Cross = () => <Svg w={8} h={9} vb="0 0 8 9"><path d="M1 1l6 7M7 1L1 8" stroke="#111" strokeWidth="1.600" /></Svg>;

function PanelHead({ title, pin = true }: { title: string; pin?: boolean }) {
  return (
    <header className="flex h-[25px] shrink-0 items-center bg-linear-to-r from-[#bccad9] to-[#d6e4f1] pr-[5px] pl-[4px]">
      <h2>{title}</h2>
      <span className="ml-auto flex items-center gap-[8px]">{pin && <Pin />}<Cross /></span>
    </header>
  );
}

/* ---------- table of contents ---------- */

type Row = { t: string; d: number; k?: "+" | "-" | "sw" | "txt" | "dot"; on?: boolean; c?: string };

const sw = (t: string, c: string, d = 2): Row => ({ t, d, k: "sw", c });
const ramp: [string, string][] = [["100m", "bg-[#feead7]"], ["200m", "bg-[#f0bb9b]"], ["300m", "bg-[#e08263]"], ["400m", "bg-[#d14835]"], ["500m", "bg-[#c30b0c]"]];

const rows: Row[] = [
  { t: "Placer", d: 1, k: "-", on: true },
  { t: "", d: 1, k: "dot" },
  { t: "Affected Regions", d: 1, k: "+" },
  { t: "Affected Provinces", d: 1, k: "+" },
  { t: "Impact", d: 1, k: "-", on: true },
  ...["Number of Deaths", "Number of Injuries", "Number of Missing", "Reported Non-passable Roads", "Reported Non-passable Bridge", "Damaged Communication Lines", "Number of Damaged Houses", "Damage to Agriculture", "Damage to Infrastructure"].map((t): Row => ({ t, d: 2, k: "+" })),
  { t: "Distance from Typhoon Path", d: 2, k: "-", on: true },
  { t: "IMP_PATH", d: 2, k: "txt" },
  ...ramp.map(([t, c]) => sw(t, c)),
  { t: "Adaptive Capacity", d: 1, k: "-" },
  ...["Political Classification", "Regional GDP", "Provincial 4 Pillars", "Land Cover", "Green Band (Alternate NDVI)", "Change in Global Tree Cover – (2000-2010)", "Change in Global Biomass Carbon - (2000-2010)", "Global Human Modification"].map((t): Row => ({ t, d: 2, k: "+" })),
  { t: "Priority Sites", d: 1, k: "-" },
  { t: "Vulnerability", d: 1, k: "txt" },
  sw("Low", "bg-[#feead7]", 1), sw("Medium", "bg-[#e08263]", 1), sw("High", "bg-[#c30b0c]", 1),
  { t: "Global Human Modification", d: 1, k: "+" },
];

function Expander({ open }: { open: boolean }) {
  return (
    <Svg w={9} h={9} vb="0 0 9 9">
      <path d="M.5.500h8v8h-8z" fill="#fafafa" stroke="#919191" />
      <path d={open ? "M2 4.500h5" : "M2 4.500h5M4.500 2v5"} stroke="#2b4a9b" />
    </Svg>
  );
}

function TocRow({ r }: { r: Row }) {
  const deep = r.d === 2;
  if (r.k === "dot") return <li className="flex h-[23px] items-center pl-[59px]"><Svg w={9} h={9} vb="0 0 9 9"><circle cx="4.500" cy="4.500" r="3.500" fill="#b0102c" stroke="#000" strokeWidth="2" /></Svg></li>;
  if (r.k === "txt") return <li className={deep ? "h-[23px] pl-[100px]" : "h-[23px] pl-[81px]"}>{r.t}</li>;
  if (r.k === "sw")
    return (
      <li className={deep ? "flex h-[23px] items-center gap-[6px] pl-[75px]" : "flex h-[23px] items-center gap-[6px] pl-[56px]"}>
        <span className={"h-[10px] w-[14px] " + r.c} />{r.t}
      </li>
    );
  const sel = r.t.startsWith("Distance");
  return (
    <li className={deep ? "flex h-[23px] items-center gap-[8px] pl-[45px]" : "flex h-[23px] items-center gap-[8px] pl-[26px]"}>
      <Expander open={r.k === "-"} />
      <label className="flex h-full items-center gap-[6px]">
        <span className="relative flex">
          <input type="checkbox" defaultChecked={r.on} className="peer h-[11px] w-[11px] appearance-none border border-black bg-white" />
          <span className="pointer-events-none absolute inset-0 hidden peer-checked:block"><Svg w={11} h={11} vb="0 0 11 11"><path d="M2 5l2.500 3L9 2.500" stroke="#000" strokeWidth="2" /></Svg></span>
        </span>
        <span className={sel ? "h-full bg-[#0078d7] px-[2px] whitespace-nowrap text-white" : "px-[2px] whitespace-nowrap"}>{r.t}</span>
      </label>
    </li>
  );
}

function Toc() {
  return (
    <aside className="flex w-[452px] shrink-0 flex-col">
      <PanelHead title="Table Of Contents" />
      <div className="flex h-[26px] items-center bg-linear-to-b from-[#fcfcfc] to-[#ececec] pl-[4px]">
        {["tree", "cyl", "layer", "layersel", "|", "list"].map((n, i) => <Tool key={i} n={n} />)}
      </div>
      <div className="flex flex-1 border border-[#828790] bg-white p-px pr-[3px]">
        <ul className="flex-1 leading-[23px]">
          <li className="flex h-[23px] items-center gap-[6px] pl-[7px]">
            <Expander open />
            <Svg w={16} h={14} vb="0 0 16 14"><path d="M4 9h12l-3 4H0zM4 5h12l-3 4H0zM4 1h12l-3 4H0z" fill="#f6cf86" stroke="#b98a3a" /></Svg>
            <b className="font-bold text-black">Layers</b>
          </li>
          {rows.map((r, i) => <TocRow key={i} r={r} />)}
        </ul>
        <div className="flex w-[19px] flex-col items-center bg-[#f0f0f0]">
          <span className="flex h-[21px] items-center"><Svg w={11} h={8} vb="0 0 11 8"><path d="M1 7l4.500-5L10 7" stroke="#555" strokeWidth="1.800" /></Svg></span>
          <span className="h-[570px] w-full bg-[#cdcdcd]" />
          <span className="mt-auto flex h-[21px] items-center"><Svg w={11} h={8} vb="0 0 11 8"><path d="M1 1l4.500 5L10 1" stroke="#555" strokeWidth="1.800" /></Svg></span>
        </div>
      </div>
    </aside>
  );
}

/* ---------- map ---------- */

const C1 = "#feead7", C2 = "#f0bb9b", C3 = "#e08263", C4 = "#d14835", C5 = "#c30b0c";

function Land({ id, d, fill, bands = [] }: { id: string; d: string; fill: string; bands?: [string, string][] }) {
  return (
    <g>
      <clipPath id={id}><path d={d} /></clipPath>
      <path d={d} fill={fill} />
      <g clipPath={"url(#" + id + ")"}>{bands.map(([c, b], i) => <path key={i} d={b} fill={c} />)}</g>
      <path d={d} stroke="#000" strokeWidth="4" />
    </g>
  );
}

function Islets({ pts, s = 6 }: { pts: string; s?: number }) {
  const d = pts.split(" ").map((p) => { const [x, y] = p.split(","); return "M" + x + " " + y + "h" + s + "v" + s + "h-" + s + "z"; }).join("");
  return <path d={d} fill="#000" />;
}

const luzon =
  "M536 352L560 350 568 338 574 348 592 342 606 340 624 356 644 366 660 378 680 382 700 386 716 378 720 346 736 358 744 376 742 394 726 408 724 440 722 462 728 486 738 500 752 502 754 524 768 530 762 556 750 580 734 610 730 636 706 662 718 642 690 656 666 664 648 684 650 698 660 702 646 730 628 750 640 776 654 810 668 830 656 838 660 874 672 890 674 904 700 922 734 928 746 900 752 882 780 876 800 880 824 900 836 920 832 944 852 952 862 940 856 912 874 920 910 926 940 944 926 952 892 954 890 970 910 986 930 1004 972 1020 920 1016 918 1032 950 1028 970 1040 962 1060 940 1062 914 1062 880 1048 862 1038 860 1008 848 988 820 978 804 962 796 942 770 930 756 926 764 944 764 968 784 990 788 1012 776 1022 764 1008 758 986 740 970 720 950 700 934 670 924 640 938 630 958 610 970 590 968 586 952 572 960 570 940 556 928 544 934 538 944 536 910 530 886 548 878 578 858 580 842 566 824 540 814 526 824 532 866 516 864 504 852 500 836 486 824 470 820 464 796 462 766 450 740 454 716 446 684 432 674 434 626 452 618 466 640 480 662 500 662 514 648 504 630 498 590 506 560 518 540 514 500 520 490 508 472 514 440 522 412 532 384z";

const mindanao =
  "M1120 540L1134 544 1150 560 1176 570 1190 584 1204 602 1222 602 1218 622 1230 640 1240 658 1236 672 1212 686 1226 694 1246 698 1248 730 1254 742 1246 772 1256 790 1270 800 1272 830 1270 856 1256 876 1246 892 1234 884 1230 910 1226 940 1222 982 1212 960 1206 928 1200 900 1186 880 1176 850 1160 858 1158 876 1170 884 1168 900 1156 896 1152 884 1134 892 1120 912 1122 936 1144 956 1158 976 1162 1000 1154 1030 1134 1056 1124 1070 1112 1070 1110 1048 1096 1040 1110 1016 1106 1004 1092 1004 1088 1034 1050 1028 1010 1010 976 994 956 970 954 930 942 916 944 896 956 876 974 866 980 850 966 832 950 814 920 802 900 792 882 792 886 810 872 826 880 838 866 842 856 826 836 826 838 806 826 826 808 856 798 852 802 836 794 824 798 800 776 798 762 806 752 830 740 850 734 866 730 884 716 906 694 896 686 880 694 860 704 850 710 820 712 790 726 772 750 762 780 754 816 748 826 740 820 720 830 706 866 702 872 678 890 688 912 688 926 706 932 730 934 750 906 770 940 746 976 740 984 710 1000 692 1016 698 1038 706 1046 690 1044 660 1052 642 1074 648 1088 658 1098 632 1116 638 1134 640 1138 620 1130 590 1122 570z";

function MapDrawing() {
  return (
    <svg width="460" height="700" viewBox="0 0 1380 2100" fill="none" shapeRendering="crispEdges" role="img" aria-label="Philippines, distance from typhoon path" strokeLinejoin="round">
      <g stroke="#000" strokeWidth="7">
        <path d={luzon} />
        <path d="M962 912l18-6 10 20 8 18-8 24-20 6-14-8 10-16-4-20zM680 796l20-8 8 16-4 26-12 6-2-20zM632 248l14-4 6 12-10 8zM694 226h10v8h-10zM692 300l10-6 4 8-12 10zM450 618l14 22M696 896l34 22M720 900l16 16M712 806l16 16M930 1004l40 8M740 832l22-8" />
        <path d="M686 78l6-10M684 132l24-22M612 278l4 18M616 310h30M456 618l8 22M902 920l30 14M940 1044l20 10M856 908l10 12" strokeWidth="9" />
        <path d="M706 896l30 24M722 804l10 22M880 922l54 16M916 1000l50 18M478 820h16M530 812h16M560 962l14-8" strokeWidth="12" />
      </g>
      <Islets pts="694,52 720,174 696,76 436,690 702,864 798,868 804,860 818,858 948,916 930,924 812,1022 990,1074 684,882" />
      <g transform="translate(0 900)">
        <g stroke="#000" strokeWidth="6">
          <path d="M858 194l18 12 24 6 22 10 18 40 16 38-26-16-20-14-22-26-18 12-22 22 8-38zM818 124l22 16 30 40-28-16zM896 182l16 8 10 32-16-8zM926 150l14 10 26-24-2 60-18 4-16-16zM936 146h14v12h-14z" />
          <path d="M860 196v44M838 152l26 26M896 262l20 14M900 190l14 24" strokeWidth="9" />
        </g>
        <Land id="lubang" fill={C1} d="M462 32l14 8 20-2 4 14 12 12-22-6-16-10z" />
        <Land id="mindoro" fill={C2} d="M494 92L500 80 540 82 574 78 592 90 606 92 620 100 632 112 640 126 648 130 640 142 642 182 648 188 640 204 630 214 632 226 615 236 600 234 590 246 580 238 572 214 562 190 554 178 550 150 544 132 530 118 516 112 512 98z" bands={[[C3, "M400 176L560 178 700 186V300H400z"]]} />
        <Land id="marinduque" fill={C2} d="M678 80L692 72 704 80 722 82 720 96 714 116 698 118 684 108 678 96z" />
        <Land id="tablas" fill={C3} d="M706 190L718 188 716 210 712 236 704 252 694 250 696 228 700 208zM730 188l8 4 2 12-8 2zM754 214L776 206 788 216 786 230 774 234 758 224zM704 150h8v8h-8zM664 150h6v6h-6zM706 164h6v8h-6zM622 250h6v18h-6zM636 268h14v14h-14z" />
        <Land id="panay" fill={C4} d="M690 258L700 276 720 288 740 298 756 316 782 322 804 318 820 332 846 326 842 350 834 372 818 386 800 394 796 412 790 430 760 434 724 440 708 450 696 466 688 460 692 436 694 414 702 398 702 360 706 330 710 304 684 298 688 284z" bands={[[C3, "M670 250h44v46h-44z"], [C5, "M680 404L800 390 850 388V480H680z"]]} />
        <Land id="guimaras" fill={C5} d="M776 424L788 430 790 444 780 462 764 466 760 458 766 442z" />
        <Land id="negros" fill={C5} d="M820 406L850 394 870 392 894 400 892 420 880 442 868 470 860 500 848 530 846 560 852 580 862 596 860 612 850 630 836 636 818 632 808 618 806 598 784 590 766 574 750 556 748 538 760 520 784 516 800 508 806 484 800 458 806 432z" bands={[[C4, "M740 618L880 612V650H740z"]]} />
        <Land id="cebu" fill={C5} d="M944 360L952 362 952 420 950 450 954 484 934 488 912 502 900 522 890 548 876 580 864 592 862 570 868 548 866 524 876 500 898 474 912 450 930 420 938 392z" bands={[[C4, "M920 350h50v28h-50z"]]} />
        <Land id="bohol" fill={C5} d="M930 516L960 504 976 492 1000 496 1016 504 1020 520 1020 544 1004 552 994 564 960 568 930 566 918 572 922 548 930 536z" />
        <Land id="samar" fill={C3} d="M980 200L992 184 1000 196 1016 200 1050 198 1066 192 1076 184 1096 194 1108 206 1112 228 1126 240 1138 256 1132 276 1126 290 1128 310 1138 334 1148 350 1140 362 1136 382 1104 376 1080 374 1076 350 1060 340 1064 316 1050 300 1040 280 1016 264 1000 252 990 236 986 214z" bands={[[C4, "M1020 280L1150 294V400H1020z"]]} />
        <Land id="leyte" fill={C4} d="M984 326L996 330 1020 352 1040 348 1056 342 1070 360 1076 380 1076 420 1088 440 1100 458 1104 480 1096 490 1108 524 1100 526 1084 500 1072 470 1068 490 1076 514 1062 504 1044 500 1040 470 1036 430 1026 404 1010 398 1000 406 994 390 992 362z" bands={[[C5, "M980 384L1090 404V540H980z"]]} />
        <Land id="biliran" fill={C4} d="M990 306l20-4 14 14-8 18-18-6zM1040 290l14 2 10 18-10 14-12-12zM1140 364l20 16 12 18-22-8zM910 366l8-10 10 12-12 8zM880 618l14-10 16 6 2 12-16 4zM1030 612l8-4 10 12-6 12-10-6z" />
        <Land id="dinagat" fill={C5} d="M1140 462L1154 458 1152 490 1158 520 1152 542 1140 530 1134 510 1138 490zM1184 520L1198 510 1206 524 1216 546 1200 548 1190 566 1184 560 1190 544 1180 528zM984 434l20-4 12-12 2 10-14 12-18 4zM1150 418h14l8 8-16 4z" />
        <Land id="mindanao" fill={C3} d={mindanao} bands={[
          [C4, "M800 600H1300V780L1240 770 1160 760 1060 740 990 730 960 726 930 718 816 728z"],
          [C5, "M1100 520H1300V662L1240 658 1136 640H1100z"],
          [C2, "M670 860L744 856V920H670zM780 838h110v30h-110zM930 842L1000 846 1110 862 1200 884 1280 888V1100H930z"],
          ["#fff", "M1004 812L1046 814 1060 834 1088 838 1092 822 1104 824 1104 862 1110 880 1102 910 1100 960 1096 968 1124 978 1140 990 1138 1016 1120 1070 1050 1100H930V924L980 924 1020 922 1030 906 1010 890 1004 878 992 870 1000 850z"],
          [C1, "M1140 990L1164 988V1060L1116 1075 1132 1030z"],
          [C2, "M1036 870l10 4-6 16 8 20 22 16-22 8-20-14z"],
        ]} />
        <path d="M954 926V968L976 994 1010 1010 1050 1028 1088 1034 1092 1004 1106 1004 1110 1016 1098 1040 1110 1050 1114 1070" stroke="#000" strokeWidth="7" />
        <Land id="palawan" fill={C5} d="M390 340L400 348 398 366 410 370 422 384 420 398 404 404 408 430 418 450 404 468 376 480 360 500 340 514 316 520 300 536 300 556 280 580 262 606 240 614 220 622 208 646 190 664 160 682 140 694 120 708 102 720 104 700 120 682 130 662 160 632 190 610 220 596 240 570 270 548 290 514 310 490 330 476 350 460 366 440 360 410 364 384 372 362z" bands={[[C4, "M350 330h80v70l-80 8z"], [C4, "M90 580L214 594 256 612 240 720H90z"], [C3, "M90 684L150 694V730H90z"]]} />
        <Land id="dumaran" fill={C5} d="M420 450L440 436 456 446 450 456 430 458z" />
        <Land id="balabac" fill={C3} d="M72 740L86 740 88 770 78 786 70 772zM88 732L108 722 120 724 118 738 100 744z" />
        <Land id="busuanga" fill={C3} d="M440 226L450 236 470 234 486 240 500 260 494 290 476 280 470 296 454 304 444 290 450 276 436 266z" />
        <path d="M444 284l20 6-6 14-12-6z" fill={C4} />
        <Land id="culion" fill={C4} d="M428 322h12v14l-10 6zM412 330h10v12h-10zM410 372h12v20h-12zM380 350h10v14h-10z" />
        <Land id="basilan" fill={C2} d="M674 936L700 922 722 928 742 938 730 952 706 966 684 956z" />
        <Land id="jolo" fill={C1} d="M558 1016L580 1004 600 1008 626 1014 620 1026 596 1032 568 1028zM418 1132L440 1114 466 1098 490 1098 488 1116 456 1130 420 1138zM372 1152h10l6 16-8 20-8-6zM544 1066h16l8 10-14 4zM548 1050l16-4-2 10zM1116 1086l20-6-2 14-14 2zM514 974l14-8 16-4-8 12-20 12z" />
        <path d="M360 396l14 20M340 452l18 8M440 240l14 6M470 280l14-6M966 492l44-2M1040 288l14 24M1140 540l20 20M1150 470v60M1170 580l20-10M470 1120l20-10M640 930l30 8M686 1000l-8 12" stroke="#000" strokeWidth="8" />
        <Islets pts="640,212 648,930 660,316 658,350 690,330 500,232 470,340 486,360 540,340 552,336 560,350 570,364 540,368 556,372 594,374 600,398 546,394 564,424 576,408 584,402 578,392 484,432 490,428 388,480 576,564 598,564 606,562 552,602 232,652 282,768 264,790 102,770 110,814 112,824 98,752 250,880 258,888 262,880 246,904 262,948 208,976 214,984 238,1000 256,992 260,984 240,984 404,1038 412,1036 440,1026 450,1022 460,1018 496,1040 472,1082 520,1084 500,1100 514,1110 530,1110 444,1138 470,1130 426,1160 440,1136 428,1146 630,918 640,910 654,936 644,940 734,900 742,892 748,920 700,906 604,1034 576,1050 642,1016 656,1010 670,1008 684,1012 552,960 556,972 570,990 500,990 510,1000 850,672 930,580 908,576 772,474 862,316 866,366 850,344 784,244 856,320 954,346 930,350 944,330 960,250 950,222 964,214 976,260 984,276 996,272 1078,524 1188,418 1214,560 1196,580 1236,900 1226,904 948,852 376,1150 450,302 400,330 396,380 350,404 364,360 416,350 404,344 1130,460 1176,516 1180,540" />
        <Islets s={9} pts="578,410 256,884 458,1020 448,1026 470,1112 480,1122 498,1112 650,934 556,1074 732,896 1050,300 1144,500 1152,536 1190,548 986,290 364,400 344,448 332,460 1130,250 1140,350" />
      </g>
    </svg>
  );
}

function MapView() {
  return (
    <div className="flex flex-1 flex-col border-2 border-t-[#6a6a6a] border-r-[#ddd] border-b-[#ddd] border-l-[#6a6a6a] bg-[#f0f0f0]">
      <div className="flex flex-1">
        <div className="relative flex-1 bg-white pt-[27px] pl-[282px]">
          <MapDrawing />
          <ul className="absolute top-[103px] left-[578px] leading-[23px]">
            {ramp.map(([t, c]) => <li key={t} className="flex h-[23px] items-center gap-[6px]"><span className={"h-[10px] w-[14px] " + c} />{t}</li>)}
          </ul>
        </div>
        <div className="flex w-[19px] flex-col items-center border-l border-[#ddd]">
          <span className="flex h-[18px] items-center"><Svg w={8} h={7} vb="0 0 8 7"><path d="M1 6l3-4 3 4" stroke="#555" strokeWidth="1.700" /></Svg></span>
          <span className="mt-[309px] h-[77px] w-full bg-[#cdcdcd]" />
          <span className="mt-auto flex h-[18px] items-center"><Svg w={8} h={7} vb="0 0 8 7"><path d="M1 1l3 4 3-4" stroke="#555" strokeWidth="1.700" /></Svg></span>
        </div>
      </div>
      <div className="flex h-[20px] items-center border-t border-[#ddd]">
        <div className="flex h-full items-start">
          <button aria-label="Data view" className="flex h-[15px] w-[15px] items-center justify-center border border-[#7db4e6] bg-[#cce4f7]"><Svg w={9} h={10}><path d="M1 1h14v14H1z" fill="#d8e8a0" stroke="#243" strokeWidth="2" /><path d="M4 10l4-6 4 3" stroke="#386" strokeWidth="2" /></Svg></button>
          <button aria-label="Layout view" className="flex h-[15px] w-[15px] items-center justify-center"><Svg w={9} h={10}><path d="M2 1h12v14H2z" fill="#fff" stroke="#243" strokeWidth="2" /><path d="M5 5h6v5H5z" fill="#47a" /></Svg></button>
          <span className="mr-[7px] h-[15px] w-px bg-[#999]" />
          <span className="flex h-[15px] items-center"><Svg w={10} h={10}><path d="M2 7q1-5 7-5l3 3M12 1v4H8M14 9q-1 5-7 5l-3-3M4 15v-4h4" stroke="#1c4f86" strokeWidth="2" /></Svg></span>
          <span className="ml-[8px] flex h-[15px] items-center"><Svg w={7} h={8} vb="0 0 8 8"><path d="M2 0v8M6 0v8" stroke="#1c4fa6" strokeWidth="2" /></Svg></span>
        </div>
        <div className="ml-[17px] flex h-full flex-1 items-center pr-[24px]">
          <Svg w={7} h={9} vb="0 0 7 9"><path d="M6 1L2 4.500 6 8" stroke="#555" strokeWidth="1.800" /></Svg>
          <span className="ml-[347px] h-[18px] w-[196px] bg-[#cdcdcd]" />
          <span className="ml-auto"><Svg w={7} h={9} vb="0 0 7 9"><path d="M1 1l4 3.500L1 8" stroke="#555" strokeWidth="1.800" /></Svg></span>
        </div>
      </div>
    </div>
  );
}

const tableTabs: [string, string][] = [["Affected Areas", "w-[111px]"], ["Typhoon Path Buffer", "w-[144px]"], ["Land Cover", "w-[87px]"], ["Priority Sites", "w-[93px]"], ["Placer", "w-[52px]"]];

function TablePanel() {
  return (
    <section className="mt-[4px] flex flex-col">
      <PanelHead title="Table" />
      <div className="flex h-[26px] items-center bg-linear-to-b from-[#fcfcfc] to-[#ececec] pl-[4px]">
        {["list", "v", "|", "related", "v", "|", "selattr", "switch", "clear", "zoomsel", "del"].map((n, i) => <Tool key={i} n={n} />)}
      </div>
      <PanelHead title="Placer" pin={false} />
      <div className="h-[17px] overflow-hidden border-t-2 border-b border-[#7a7a7a] border-b-[#ddd] bg-[#fafafa] pl-[12px]">
        <div className="flex items-start pt-[4px] leading-[20px] whitespace-nowrap">
          <span className="flex w-[46px] items-center gap-[12px] pt-[6px] pl-[2px]"><Svg w={9} h={9} vb="0 0 9 9"><path d="M1 0v9" stroke="#111" strokeWidth="1.500" /><path d="M9 0v9L3 4.500z" fill="#111" /></Svg><Svg w={6} h={9} vb="0 0 6 9"><path d="M6 0v9L0 4.500z" fill="#111" /></Svg></span>
          <input aria-label="Record" defaultValue="0" className="mt-[2px] h-[20px] w-[48px] bg-white text-right outline-none" />
          <span className="flex w-[47px] items-center gap-[12px] pt-[6px] pl-[8px]"><Svg w={6} h={9} vb="0 0 6 9"><path d="M0 0v9l6-4.500z" fill="#111" /></Svg><Svg w={9} h={9} vb="0 0 9 9"><path d="M8 0v9" stroke="#111" strokeWidth="1.500" /><path d="M0 0v9l6-4.500z" fill="#111" /></Svg></span>
          <span className="flex h-[20px] w-[21px] justify-center border-2 border-[#1a7bd0] bg-[#cce4f7] pt-[2px]"><Svg w={14} h={14}><path d="M0 1h16v14H0zM0 5h16M0 9h16" stroke="#223" strokeWidth="1.500" /></Svg></span>
          <span className="mt-[4px] ml-[4px]"><Svg w={14} h={16}><path d="M0 1h16v14H0z" fill="#6cc7c8" /><path d="M0 1h16M0 5h16M0 9h16" stroke="#223" strokeWidth="1.500" /></Svg></span>
          <span className="pt-[2px] pl-[15px]">(0 out of 1 Selected)</span>
        </div>
      </div>
      <div role="tablist" className="flex h-[25px] pl-[2px]">
        {tableTabs.map(([t, w]) => (
          <button role="tab" key={t} className={"h-[22px] border-r border-b border-[#999] text-center leading-[20px] whitespace-nowrap first:border-l " + w + (t === "Placer" ? " bg-white text-black" : " text-[#777]")}>{t}</button>
        ))}
      </div>
    </section>
  );
}

/* ---------- create features ---------- */

const sideTabs: [string, string, string][] = [["catalog", "Catalog", "w-[80px]"], ["create", "Create Features", "w-[130px]"], ["results", "Results", "w-[74px]"], ["sketch", "Edit Sketch Pr...", "w-[134px]"]];

function CreateFeatures() {
  return (
    <aside className="flex w-[425px] shrink-0 flex-col">
      <PanelHead title="Create Features" />
      <div className="flex h-[31px] items-center bg-[#f4f4f4] pl-[4px]">
        <Tool n="filter" /><span className="w-[10px]"><Tri s={6} c="#999" /></span><Tool n="org" />
        <label className="relative ml-[2px] flex h-[26px] flex-1 items-center border border-[#999] bg-[#f0f0f0]">
          <input aria-label="Search templates" placeholder="<Search>" className="w-full bg-transparent px-[3px] outline-none placeholder:text-[#777]" />
          <span className="absolute right-[3px]"><Tri c="#888" s={8} /></span>
        </label>
        <Tool n="lens" /><Tool n="lensoff" />
        <span className="w-[2px]" />
      </div>
      <div className="flex-1 border border-[#828790] bg-[#f0f0f0] pt-[10px] text-center leading-[20px] text-[#777]">There are no templates to show.</div>
      <div className="relative flex h-[15px] items-center justify-center">
        <span className="h-[2px] w-[141px] border-t border-[#999] bg-white" />
        <span className="absolute right-0 flex">
          <Svg w={12} h={11} vb="0 0 12 11"><path d="M.5.500h11v10H.5zM3.500 2.500L6 5l2.500-2.500M3.500 5.500L6 8l2.500-2.500" stroke="#111" /></Svg>
          <Svg w={12} h={11} vb="0 0 12 11"><path d="M.5.500h11v10H.5zM6 3v5" stroke="#111" /></Svg>
        </span>
      </div>
      <div className="h-[157px] border-t border-l border-[#999] pt-[2px]">
        <h3 className="flex h-[22px] items-center gap-px font-bold text-black"><Svg w={16} h={16}>{tools.create}</Svg>Construction Tools</h3>
        <p className="pt-[10px] text-center text-black">Select a template.</p>
      </div>
      <div role="tablist" className="flex h-[25px] pl-[3px]">
        {sideTabs.map(([icon, t, w]) => (
          <button role="tab" key={t} className={"flex h-[22px] items-center gap-[3px] border-r border-b border-[#999] pl-[4px] whitespace-nowrap first:border-l " + w + (icon === "create" ? " bg-white text-black" : " text-[#777]")}><Svg w={15} h={15}>{tools[icon]}</Svg>{t}</button>
        ))}
      </div>
    </aside>
  );
}

function ArcMap() {
  return (
    <section aria-label="ArcMap" className="flex flex-col bg-linear-to-r from-[#f0f0f0] to-[#fbfbfb] font-['Noto_Sans','Open_Sans',sans-serif] text-[14px] leading-[20px] text-[#222]">
      <header className="flex h-[29px] items-center bg-white">
        <AppIcon name="arcmap" s={24} />
        <h1 className="pl-[3px] text-black">Odette.mxd - ArcMap</h1>
        <div className="ml-auto flex items-center pr-[25px]">
          <span className="w-[57px]"><Svg w={12} h={12} vb="0 0 12 12"><path d="M0 6h12" stroke="#000" /></Svg></span>
          <span className="w-[59px]"><Svg w={12} h={12} vb="0 0 12 12"><path d="M.5 2.500h9v9h-9zM2.500 2V.5h9v9H10" stroke="#000" /></Svg></span>
          <Svg w={13} h={13} vb="0 0 12 12"><path d="M0 0l12 12M12 0L0 12" stroke="#000" /></Svg>
        </div>
      </header>
      <nav className="flex h-[31px] items-center gap-[16px] pl-[12px]">
        {["File", "Edit", "View", "Bookmarks", "Insert", "Selection", "Geoprocessing", "Customize", "Windows", "Help"].map((t) => <button key={t}>{t}</button>)}
      </nav>
      <div className="flex h-[26px] items-center">
        <div className="flex h-full items-center rounded bg-linear-to-b from-[#fefefe] to-[#eeeeee]">
          <Grip />
          {["new", "open", "save", "print", "|", "cut", "copy", "paste", "del", "|", "undo", "redo", "|", "add", "v", "|"].map((n, i) => <Tool key={i} n={n} />)}
          <label className="relative flex h-[24px] w-[148px] items-center border border-[#777] bg-white">
            <select aria-label="Map scale" className="w-full appearance-none bg-transparent px-[2px] outline-none"><option>1:12,563,943</option></select>
            <span className="pointer-events-none absolute right-[4px]"><Chev c="#444" s={10} /></span>
          </label>
          {["|", "edit", "|", "toc", "catalog", "searchwin", "toolbox", "python", "|", "model"].map((n, i) => <Tool key={i} n={n} />)}
          <Overflow />
        </div>
      </div>
      <div className="mb-px flex h-[26px] items-center">
        <div className="flex h-full items-center rounded bg-linear-to-b from-[#fefefe] to-[#eeeeee]">
          <Grip />
          {["zoomin", "zoomout", "pan", "globe", "|", "fixin", "fixout", "|", "back", "fwd", "|", "select", "v", "clear", "|", "pointer", "|", "info", "bolt", "html", "|", "measure", "|", "binoc", "route", "xy", "|", "time", "|", "viewer"].map((n, i) => <Tool key={i} n={n} />)}
          <Overflow />
        </div>
      </div>
      <main className="flex items-stretch">
        <Toc />
        <div className="mr-[5px] ml-[4px] flex min-w-0 flex-1 flex-col"><MapView /><TablePanel /></div>
        <CreateFeatures />
      </main>
      <footer className="flex h-[24px] justify-end bg-[#f0f0f0]">
        <span className="my-px w-[127px] border border-[#f8f8f8]" />
        <span className="my-px ml-[3px] w-[17px] border border-[#f8f8f8]" />
        <span className="my-px ml-[3px] w-[320px] border border-[#f8f8f8]" />
      </footer>
    </section>
  );
}

export default function App() {
  return (
    <div className="min-w-[1900px] bg-[#f0f0f0] font-['Open_Sans','Noto_Sans',sans-serif]">
      <section aria-label="Desktop" className="relative">
        <TopTaskbar />
        <Excel />
        <Paint />
        <SearchWindow />
        <Taskbar />
      </section>
      <ArcMap />
    </div>
  );
}
